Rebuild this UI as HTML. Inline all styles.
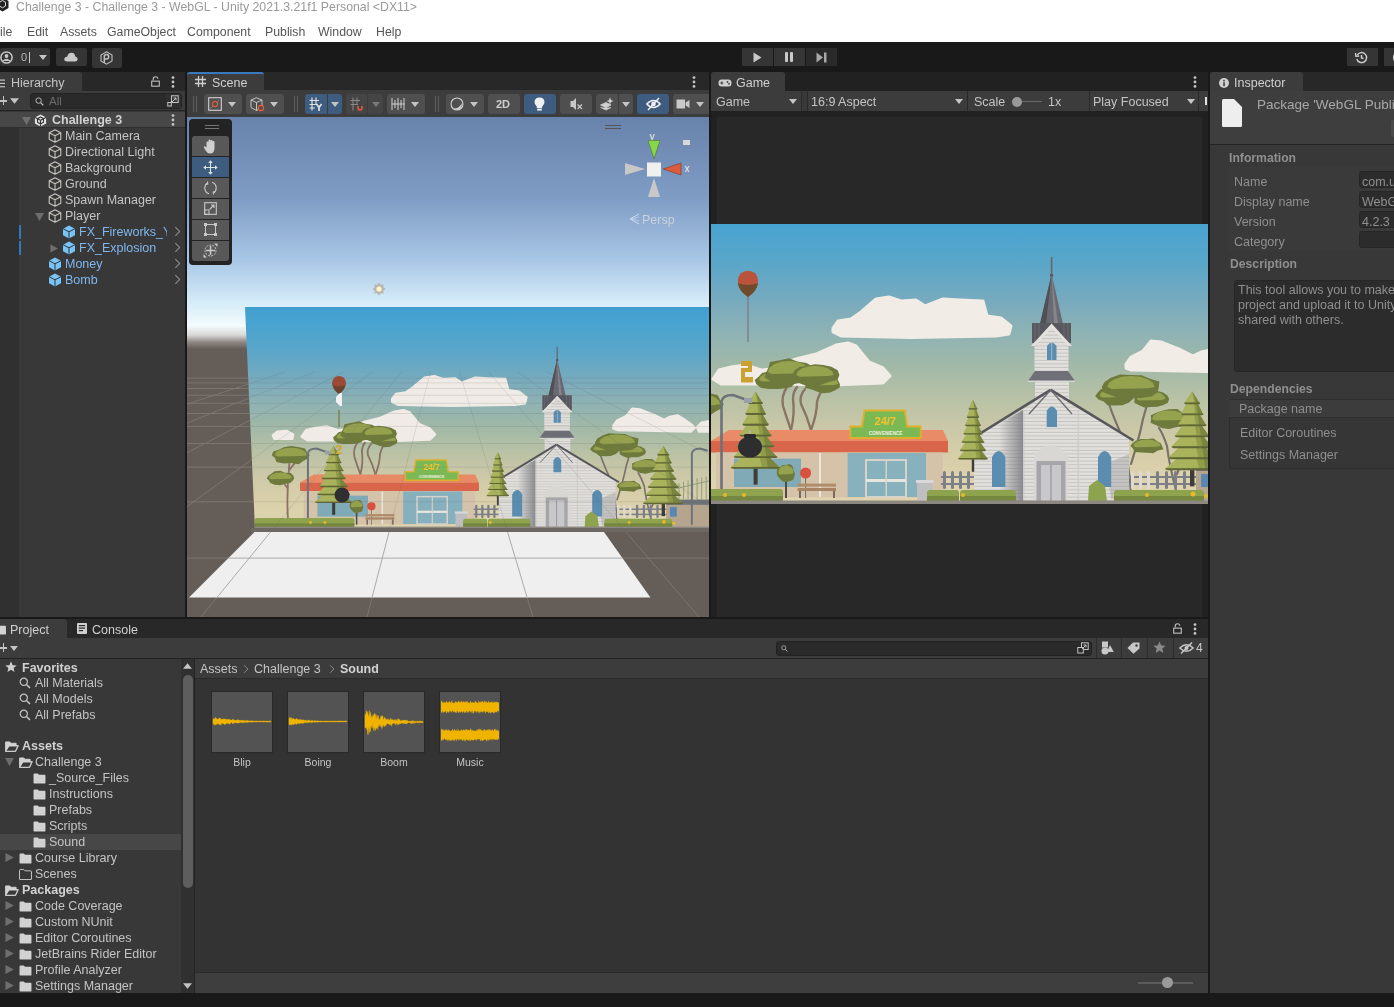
<!DOCTYPE html>
<html><head><meta charset="utf-8">
<style>
*{box-sizing:border-box;margin:0;padding:0}
html,body{width:1394px;height:1007px;overflow:hidden;background:#191919;font-family:"Liberation Sans",sans-serif;font-size:12.5px;color:#c4c4c4}
.a{position:absolute}
.t{position:absolute;white-space:nowrap;line-height:1;will-change:transform}
svg{position:absolute;overflow:visible}
</style></head><body>
<svg width="0" height="0" style="position:absolute;left:0;top:0">
<defs>
<symbol id="cubeo" viewBox="0 0 14 14"><path d="M7,0.8 L12.8,3.8 L12.8,10.2 L7,13.2 L1.2,10.2 L1.2,3.8 Z M1.2,3.8 L7,6.8 L12.8,3.8 M7,6.8 L7,13.2" fill="none" stroke="#c9c6c2" stroke-width="1.1" stroke-linejoin="round"/></symbol>
<symbol id="cubeb" viewBox="0 0 14 14"><path d="M7,0.6 L13,3.7 L13,10.3 L7,13.4 L1,10.3 L1,3.7 Z" fill="#79c4f4"/><path d="M1,3.7 L7,6.8 L13,3.7 M7,6.8 L7,13.4" fill="none" stroke="#2a3640" stroke-width="1"/></symbol>
<symbol id="ucube" viewBox="0 0 14 14"><path d="M7,0.5 L13,3.8 L13,10.2 L7,13.5 L1,10.2 L1,3.8 Z" fill="#e8e8e8"/><path d="M7,3.2 L10.2,5 L10.2,8.8 L7,10.7 L3.8,8.8 L3.8,5 Z M7,6.8 L7,13.5 M7,6.8 L1,3.8 M7,6.8 L13,3.8" fill="none" stroke="#383838" stroke-width="1.3"/></symbol>
<symbol id="tri_d" viewBox="0 0 10 10"><path d="M0,1 L10,1 L5,10 Z" fill="#6e6e6e"/></symbol>
<symbol id="tri_r" viewBox="0 0 10 10"><path d="M0.5,0 L10,5 L0.5,10 Z" fill="#6e6e6e"/></symbol>
<symbol id="chev" viewBox="0 0 8 12"><path d="M1.5,1 L6.5,6 L1.5,11" fill="none" stroke="#8a8a8a" stroke-width="1.3"/></symbol>
<symbol id="dd" viewBox="0 0 10 6"><path d="M0,0 L10,0 L5,6 Z" fill="#c4c4c4"/></symbol>
<symbol id="dots" viewBox="0 0 4 12"><circle cx="2" cy="1.6" r="1.4" fill="#c4c4c4"/><circle cx="2" cy="6" r="1.4" fill="#c4c4c4"/><circle cx="2" cy="10.4" r="1.4" fill="#c4c4c4"/></symbol>
<symbol id="lock" viewBox="0 0 10 12"><path d="M2.5,5 L2.5,3.2 Q2.5,0.8 5,0.8 Q7.5,0.8 7.5,3" fill="none" stroke="#c4c4c4" stroke-width="1.2"/><rect x="0.8" y="5.6" width="8.4" height="5.6" fill="none" stroke="#c4c4c4" stroke-width="1.2"/></symbol>
<symbol id="fold" viewBox="0 0 14 12"><path d="M0.5,1.5 Q0.5,0.5 1.5,0.5 L5,0.5 L6.5,2 L12.5,2 Q13.5,2 13.5,3 L13.5,11 Q13.5,11.5 13,11.5 L1,11.5 Q0.5,11.5 0.5,11 Z" fill="#d2d2d2"/></symbol>
<symbol id="foldo" viewBox="0 0 14 12"><path d="M0.5,1.5 Q0.5,0.5 1.5,0.5 L5,0.5 L6.5,2 L12.5,2 Q13.5,2 13.5,3 L13.5,11 Q13.5,11.5 13,11.5 L1,11.5 Q0.5,11.5 0.5,11 Z" fill="none" stroke="#d2d2d2" stroke-width="1"/></symbol>
<symbol id="foldopen" viewBox="0 0 15 12"><path d="M0.5,11.5 L0.5,1 L5,1 L6.5,2.5 L12,2.5 L12,5 L4,5 L0.5,11.5 L11.5,11.5 L14.5,5 L4,5" fill="#d2d2d2" stroke="#d2d2d2" stroke-width="1" stroke-linejoin="round"/><path d="M1.5,10.5 L4.5,6 L13,6 L10.8,10.5 Z" fill="#383838"/></symbol>
<symbol id="search" viewBox="0 0 12 12"><circle cx="4.8" cy="4.8" r="3.6" fill="none" stroke="#c4c4c4" stroke-width="1.2"/><path d="M7.5,7.5 L11,11" stroke="#c4c4c4" stroke-width="1.6"/></symbol>
</defs></svg>
<svg width="0" height="0" style="position:absolute;left:0;top:0">
<defs>
<linearGradient id="sky" x1="0" y1="-25" x2="0" y2="280" gradientUnits="userSpaceOnUse">
<stop offset="0" stop-color="#3f9ed0"/><stop offset="0.082" stop-color="#48a3d0"/><stop offset="0.213" stop-color="#5aa6c9"/><stop offset="0.344" stop-color="#7aabbd"/><stop offset="0.443" stop-color="#8fb3b4"/><stop offset="0.541" stop-color="#a0b8a8"/><stop offset="0.672" stop-color="#bcc3a6"/><stop offset="0.738" stop-color="#c8c7a8"/><stop offset="0.836" stop-color="#d6cea9"/><stop offset="0.934" stop-color="#ddd3ad"/><stop offset="1" stop-color="#e0d5ae"/>
</linearGradient>
<pattern id="siding" x="0" y="0" width="20" height="3.6" patternUnits="userSpaceOnUse"><rect width="20" height="3.6" fill="#e2e0dc"/><rect y="2.6" width="20" height="1" fill="#c4c3c0"/></pattern>
<g id="pine1"><rect x="-2.2" y="70" width="4.4" height="22" fill="#3f3d3a"/><polygon points="-10.8,61 10.8,61 27.2,76 -27.2,76" fill="#909c48"/><polygon points="-10.8,61 3.24,61 6.8,74 -27.2,75" fill="#a9b35c"/><polygon points="10.8,61 27.2,76 13.6,76" fill="#7a8540"/><polygon points="-27.2,74.5 27.2,74.5 24.48,76.3 -24.48,76.3" fill="#5f6636"/><polygon points="-9.36,50.3333 9.36,50.3333 24,65.3333 -24,65.3333" fill="#909c48"/><polygon points="-9.36,50.3333 2.808,50.3333 6,63.3333 -24,64.3333" fill="#a9b35c"/><polygon points="9.36,50.3333 24,65.3333 12,65.3333" fill="#7a8540"/><polygon points="-24,63.8333 24,63.8333 21.6,65.6333 -21.6,65.6333" fill="#5f6636"/><polygon points="-7.92,39.6667 7.92,39.6667 20.8,54.6667 -20.8,54.6667" fill="#909c48"/><polygon points="-7.92,39.6667 2.376,39.6667 5.2,52.6667 -20.8,53.6667" fill="#a9b35c"/><polygon points="7.92,39.6667 20.8,54.6667 10.4,54.6667" fill="#7a8540"/><polygon points="-20.8,53.1667 20.8,53.1667 18.72,54.9667 -18.72,54.9667" fill="#5f6636"/><polygon points="-6.48,29 6.48,29 17.6,44 -17.6,44" fill="#909c48"/><polygon points="-6.48,29 1.944,29 4.4,42 -17.6,43" fill="#a9b35c"/><polygon points="6.48,29 17.6,44 8.8,44" fill="#7a8540"/><polygon points="-17.6,42.5 17.6,42.5 15.84,44.3 -15.84,44.3" fill="#5f6636"/><polygon points="-5.04,18.3333 5.04,18.3333 14.4,33.3333 -14.4,33.3333" fill="#909c48"/><polygon points="-5.04,18.3333 1.512,18.3333 3.6,31.3333 -14.4,32.3333" fill="#a9b35c"/><polygon points="5.04,18.3333 14.4,33.3333 7.2,33.3333" fill="#7a8540"/><polygon points="-14.4,31.8333 14.4,31.8333 12.96,33.6333 -12.96,33.6333" fill="#5f6636"/><polygon points="-3.6,7.66667 3.6,7.66667 11.2,22.6667 -11.2,22.6667" fill="#909c48"/><polygon points="-3.6,7.66667 1.08,7.66667 2.8,20.6667 -11.2,21.6667" fill="#a9b35c"/><polygon points="3.6,7.66667 11.2,22.6667 5.6,22.6667" fill="#7a8540"/><polygon points="-11.2,21.1667 11.2,21.1667 10.08,22.9667 -10.08,22.9667" fill="#5f6636"/><polygon points="0,0 0,0 8,12 -8,12" fill="#909c48"/><polygon points="0,0 0,0 2,10 -8,11" fill="#a9b35c"/><polygon points="0,0 8,12 4,12" fill="#7a8540"/><polygon points="-8,10.5 8,10.5 7.2,12.3 -7.2,12.3" fill="#5f6636"/></g>
<g id="town">
<rect x="-80" y="-25" width="630" height="305" fill="url(#sky)"/>
<g fill="#f1ece6" stroke="#f1ece6" stroke-width="3" stroke-linejoin="round">
<polygon points="122,104 127,97 140,95 150,88 165,75 178,73 190,77 205,76 214,82 232,75 249,76 272,77 276,92 290,94 300,102 298,110 285,112 200,113.5 130,112 122,108"/>
<polygon points="2,155 8,146 20,143 35,141 50,146 60,145 85,135 105,130 125,121 137,119 145,122 158,138 172,144 179,152 172,159 120,161 60,160 10,160"/>
<polygon points="415,140 420,133 432,127 440,117 450,118 470,126 482,132 490,128 500,126 508,131 518,138 523,143 518,148 470,147 420,146 415,144"/>
<polygon points="526,142 532,136 542,134 550,140 548,148 528,148"/>
<polygon points="-36,153 -30,148 -18,147 -9,152 -10,158 -34,158"/>
</g>
<g stroke="#8a7464" stroke-width="2.4" fill="none" stroke-linecap="round"><path d="M80,206 Q76,195 72,182 Q70,172 76,163"/><path d="M80,206 Q84,190 82,175 Q82,168 86,163"/><path d="M100,206 Q96,192 90,180 Q88,172 94,165"/><path d="M100,206 Q106,190 106,178 Q108,170 112,165"/></g>
<polygon points="85.7,156.0 83.6,159.5 80.5,162.9 73.4,164.5 66.0,165.0 58.2,165.0 49.7,163.8 45.2,160.1 43.7,156.0 47.9,152.4 51.0,148.9 58.4,147.3 66.0,146.8 73.3,147.6 79.8,149.4 87.4,151.8" fill="#6e7a3c"/><polygon points="48.2,156.0 49.5,152.7 53.4,150.0 59.2,148.1 66.0,147.5 72.8,148.1 78.6,150.0 82.5,152.7 83.8,156.0 78.6,157.0 51.3,157.6" fill="#95a24e"/><polygon points="128.9,160.0 128.8,163.5 124.3,166.2 119.1,168.5 112.0,169.3 105.8,167.4 100.8,165.6 94.0,163.7 95.0,160.0 96.4,156.8 97.8,152.9 105.2,151.7 112.0,150.3 118.8,151.7 125.2,153.4 127.2,156.8" fill="#6e7a3c"/><polygon points="96.7,160.0 97.9,157.1 101.2,154.6 106.1,152.9 112.0,152.3 117.9,152.9 122.8,154.6 126.1,157.1 127.3,160.0 122.8,160.9 99.4,161.4" fill="#95a24e"/><polygon points="100.8,148.0 103.0,153.4 96.8,157.8 87.0,159.3 78.0,161.0 68.5,159.9 59.7,157.5 53.3,153.3 55.4,148.0 57.5,143.6 58.9,138.1 68.6,136.2 78.0,134.2 86.4,137.4 95.4,138.9 102.3,142.8" fill="#6e7a3c"/><polygon points="56.8,148.0 58.4,143.8 63.0,140.2 69.9,137.8 78.0,136.9 86.1,137.8 93.0,140.2 97.6,143.8 99.2,148.0 93.0,149.3 60.5,150.1" fill="#95a24e"/><polygon points="128.4,151.0 126.5,155.7 117.9,158.0 111.6,160.2 104.0,162.9 95.1,161.7 87.8,159.1 84.6,155.0 81.4,151.0 83.2,146.7 88.1,143.1 96.3,141.7 104.0,140.2 112.2,141.1 120.4,142.8 126.7,146.3" fill="#6e7a3c"/><polygon points="85.3,151.0 86.7,147.4 90.8,144.4 96.8,142.4 104.0,141.7 111.2,142.4 117.2,144.4 121.3,147.4 122.7,151.0 117.2,152.1 88.6,152.8" fill="#95a24e"/>
<g stroke="#7a726a" stroke-width="2.2" fill="none" stroke-linecap="round"><path d="M420,270 Q418,235 410,210 Q402,192 398,180"/><path d="M420,240 Q428,215 432,195 L436,181"/><path d="M466,270 Q458,240 456,222 Q452,210 448,204"/><path d="M466,250 Q474,232 474,205"/></g>
<polygon points="422.5,172.0 421.6,175.6 417.6,178.8 411.6,181.2 404.0,181.5 396.4,181.2 392.7,177.6 387.5,175.4 384.1,172.0 386.8,168.4 390.0,165.0 397.8,164.5 404.0,163.1 410.5,164.2 416.9,165.6 420.9,168.5" fill="#6e7a3c"/><polygon points="388.7,172.0 389.9,169.1 393.2,166.6 398.1,164.9 404.0,164.3 409.9,164.9 414.8,166.6 418.1,169.1 419.3,172.0 414.8,172.9 391.4,173.4" fill="#95a24e"/><polygon points="458.2,175.0 456.9,178.7 452.0,181.3 446.1,182.8 440.0,182.9 433.2,183.6 428.1,181.3 423.3,178.7 423.5,175.0 423.3,171.3 428.6,169.0 433.0,166.1 440.0,165.5 446.4,166.9 452.1,168.6 456.4,171.4" fill="#6e7a3c"/><polygon points="425.6,175.0 426.6,172.1 429.8,169.6 434.5,167.9 440.0,167.3 445.5,167.9 450.2,169.6 453.4,172.1 454.4,175.0 450.2,175.9 428.1,176.4" fill="#95a24e"/><polygon points="447.8,163.0 446.8,168.2 440.6,172.6 429.8,174.0 420.0,174.5 409.6,174.6 401.3,171.7 392.2,168.3 390.7,163.0 393.5,157.9 399.9,153.7 408.9,150.5 420.0,151.1 430.6,151.2 438.2,154.6 448.4,157.5" fill="#6e7a3c"/><polygon points="396.2,163.0 398.0,158.8 403.2,155.2 410.9,152.8 420.0,151.9 429.1,152.8 436.8,155.2 442.0,158.8 443.8,163.0 436.8,164.3 400.4,165.1" fill="#95a24e"/><polygon points="477.2,195.0 474.9,198.5 472.7,202.3 464.9,203.3 458.0,205.1 450.6,203.9 445.4,201.3 439.5,198.8 440.2,195.0 439.8,191.2 445.3,188.7 451.1,186.7 458.0,185.2 466.3,185.0 470.9,188.6 475.3,191.4" fill="#6e7a3c"/><polygon points="441.0,195.0 442.3,191.7 446.0,189.0 451.5,187.1 458.0,186.5 464.5,187.1 470.0,189.0 473.7,191.7 475.0,195.0 470.0,196.0 444.0,196.6" fill="#95a24e"/><polygon points="451.0,222.0 452.4,225.2 446.3,226.8 442.4,229.3 436.0,228.8 430.2,228.5 423.3,227.9 422.2,224.7 419.5,222.0 421.4,219.2 424.8,216.8 429.9,215.1 436.0,215.1 442.6,214.5 446.2,217.2 449.8,219.3" fill="#6e7a3c"/><polygon points="422.4,222.0 423.4,219.6 426.4,217.5 430.8,216.1 436.0,215.6 441.2,216.1 445.6,217.5 448.6,219.6 449.6,222.0 445.6,222.8 424.8,223.2" fill="#95a24e"/>
<g stroke="#8a7464" stroke-width="2.4" fill="none"><path d="M-16,266 Q-18,230 -14,190"/><path d="M-16,225 Q-24,215 -28,208"/><path d="M-14,200 Q-6,188 2,182"/></g>
<polygon points="12.8,180.0 10.4,184.5 4.1,187.7 -1.6,192.1 -12.0,190.6 -21.6,191.1 -31.4,189.3 -32.8,184.1 -37.3,180.0 -35.7,175.3 -27.7,172.4 -21.3,169.2 -12.0,167.4 -2.5,169.0 6.6,171.1 9.2,175.8" fill="#6e7a3c"/><polygon points="-33.2,180.0 -31.6,176.1 -27.0,172.8 -20.1,170.6 -12.0,169.8 -3.9,170.6 3.0,172.8 7.6,176.1 9.2,180.0 3.0,181.2 -29.5,181.9" fill="#95a24e"/><polygon points="-7.7,211.0 -9.7,214.4 -13.0,217.5 -19.6,218.7 -26.0,220.7 -33.4,220.0 -39.2,217.6 -41.3,214.2 -44.1,211.0 -41.9,207.7 -38.0,205.0 -33.6,201.8 -26.0,200.9 -19.9,203.6 -12.2,204.1 -9.0,207.5" fill="#6e7a3c"/><polygon points="-41.3,211.0 -40.1,208.1 -36.8,205.6 -31.9,203.9 -26.0,203.3 -20.1,203.9 -15.2,205.6 -11.9,208.1 -10.7,211.0 -15.2,211.9 -38.6,212.4" fill="#95a24e"/>
<line x1="340.6" y1="33" x2="340.6" y2="54" stroke="#66666c" stroke-width="1.6"/>
<polygon points="340.6,50 329,100 352,100" fill="#6a6a72"/>
<polygon points="340.6,50 329,100 335,100" fill="#4f4f56"/>
<polygon points="340.6,50 343,100 347,100" fill="#85858c"/>
<rect x="339" y="50" width="3.2" height="2.5" fill="#5a5a60"/>
<rect x="321" y="99" width="39" height="20" fill="#58585f"/>
<g stroke="#707078" stroke-width="0.8"><line x1="324" y1="99" x2="324" y2="119"/><line x1="328" y1="99" x2="328" y2="119"/><line x1="353" y1="99" x2="353" y2="119"/><line x1="357" y1="99" x2="357" y2="119"/></g>
<rect x="323.5" y="118" width="34" height="32" fill="url(#siding)"/>
<polygon points="323,120 340.6,101 358,120" fill="url(#siding)"/>
<polygon points="320,122 340.6,99.5 361,122 357.5,122 340.6,104 323.5,122" fill="#e4e2de"/>
<path d="M336,136 L336,122 Q340.8,115 345.5,122 L345.5,136 Z" fill="#5b8db0"/>
<rect x="340.2" y="118" width="1" height="18" fill="#d0d8e0" opacity="0.6"/>
<polygon points="317,157 324,147 357,147 364,157" fill="#6f6f77"/>
<rect x="317" y="156.5" width="47" height="1.5" fill="#d8d8d8"/>
<rect x="324" y="158" width="34" height="20" fill="url(#siding)"/>
<polygon points="263,214 339.7,169 418,214 418,277 263,277" fill="url(#siding)"/>
<linearGradient id="shad" x1="0" x2="1"><stop offset="0" stop-color="#6e7078" stop-opacity="0"/><stop offset="1" stop-color="#6e7078" stop-opacity="0.75"/></linearGradient>
<polygon points="288,200 312,186 312,277 288,277" fill="url(#shad)"/>
<polygon points="395,240 418,230 418,275 400,275" fill="#8e9096" opacity="0.35"/>
<rect x="312" y="186" width="1.5" height="91" fill="#cfcdc9"/>
<rect x="366.5" y="186" width="1.5" height="91" fill="#cfcdc9"/>
<line x1="339.7" y1="165.8" x2="257.9" y2="216.5" stroke="#55555c" stroke-width="2.6"/>
<line x1="339.7" y1="165.8" x2="422.5" y2="216.5" stroke="#55555c" stroke-width="2.6"/>
<line x1="339.7" y1="166" x2="318" y2="190" stroke="#6a6a70" stroke-width="1.3"/>
<line x1="339.7" y1="166" x2="361" y2="190" stroke="#6a6a70" stroke-width="1.3"/>
<path d="M335.7,203 L335.7,187 Q340.8,178 346,187 L346,203 Z" fill="#5b8db0"/>
<path d="M322.8,277 L322.8,232 Q339.7,210 356.6,232 L356.6,277 Z" fill="#d9d7d3"/>
<rect x="325.5" y="237" width="29" height="40" fill="#a5a5aa"/>
<rect x="330" y="241" width="20" height="36" fill="#c8c8cb"/>
<rect x="339.5" y="241" width="1" height="36" fill="#8a8a90"/>
<path d="M281,263 L281,233 Q287.7,221 294.4,233 L294.4,263 Z" fill="#5b8db0"/>
<path d="M387,263 L387,233 Q393.6,221 400.2,233 L400.2,263 Z" fill="#5b8db0"/>
<polygon points="18,206 232,206 237,217 0,217" fill="#e88b66"/>
<polygon points="0,217 237,217 237,228.5 0,228.5" fill="#d9664b"/>
<rect x="5" y="228.5" width="227" height="45" fill="#d5c3a9"/>
<rect x="23" y="234.6" width="67" height="28.4" fill="#80aab6"/>
<rect x="108" y="229" width="2" height="44" fill="#ece6dc"/>
<rect x="136.6" y="229" width="78.4" height="44" fill="#86b1bd"/>
<rect x="155" y="236" width="40" height="37" fill="none" stroke="#d8d2ca" stroke-width="2"/>
<rect x="155" y="255" width="40" height="3" fill="#e8e4de"/>
<rect x="174.5" y="236" width="1.5" height="37" fill="#d8d2ca"/>
<polygon points="152.7,185.5 194.6,185.5 197,201.6 210.7,201.6 210.7,215 138.4,215 138.4,201.6 150,201.6" fill="#dfb02b"/>
<polygon points="154.3,187.5 193,187.5 195.3,203.4 208.8,203.4 208.8,213 140.3,213 140.3,203.4 151.8,203.4" fill="#7bb955"/>
<text x="174" y="200.5" font-family="Liberation Sans" font-weight="bold" font-size="11" fill="#f3c230" text-anchor="middle">24/7</text>
<text x="174.5" y="211" font-family="Liberation Sans" font-weight="bold" font-size="4.6" fill="#f4f0e6" text-anchor="middle">CONVENIENCE</text>
<line x1="94.6" y1="249" x2="94.6" y2="274" stroke="#6a6e74" stroke-width="1"/>
<circle cx="94.6" cy="249" r="5.5" fill="#d9503e"/>
<rect x="86.6" y="259.6" width="38.4" height="3" fill="#b08c6a"/><rect x="86.6" y="264" width="38.4" height="3" fill="#a88464"/><rect x="88" y="267" width="2" height="7" fill="#7a6a5a"/><rect x="122" y="267" width="2" height="7" fill="#7a6a5a"/>
<rect x="206" y="257" width="15.4" height="19" fill="#bfbfc2"/><rect x="205" y="256" width="17.4" height="3" fill="#d8d8da"/>
<line x1="75" y1="255" x2="75" y2="274" stroke="#4f4c46" stroke-width="2"/><polygon points="83.9,249.0 83.4,252.5 82.0,256.0 78.4,257.2 75.0,258.0 71.5,257.5 69.1,254.9 66.7,252.5 65.7,249.0 66.1,245.3 69.3,243.3 71.7,241.1 75.0,240.9 78.7,240.1 81.7,242.3 82.4,245.9" fill="#6e7a3c"/><polygon points="67.3,249.0 67.9,246.1 69.6,243.6 72.1,241.9 75.0,241.3 77.9,241.9 80.4,243.6 82.1,246.1 82.7,249.0 80.4,249.9 68.7,250.4" fill="#95a24e"/>
<g fill="#7c7f88"><rect x="230" y="252" width="33" height="2"/><rect x="230" y="259" width="33" height="2"/><rect x="232" y="247" width="3" height="18" rx="1.5"/><rect x="240" y="247" width="3" height="18" rx="1.5"/><rect x="248" y="247" width="3" height="18" rx="1.5"/><rect x="256" y="247" width="3" height="18" rx="1.5"/>
<rect x="418" y="252" width="70" height="2"/><rect x="418" y="259" width="70" height="2"/><rect x="445" y="247" width="3" height="18" rx="1.5"/><rect x="454" y="247" width="3" height="18" rx="1.5"/><rect x="463" y="247" width="3" height="18" rx="1.5"/><rect x="472" y="247" width="3" height="18" rx="1.5"/></g>
<g fill="#dedad2"><rect x="420" y="247" width="3" height="18" rx="1.5"/><rect x="428" y="247" width="3" height="18" rx="1.5"/><rect x="436" y="247" width="3" height="18" rx="1.5"/></g>
<rect x="485" y="246" width="62" height="31" fill="#b5a58e"/><rect x="485" y="240" width="62" height="7" fill="#6f7378"/><g stroke="#8b9a7e" stroke-width="1.2"><line x1="490" y1="240" x2="490" y2="222"/><line x1="496" y1="240" x2="496" y2="220"/><line x1="502" y1="240" x2="502" y2="218"/><line x1="508" y1="240" x2="508" y2="216"/><line x1="514" y1="240" x2="514" y2="214"/><line x1="520" y1="240" x2="520" y2="212"/><line x1="526" y1="240" x2="526" y2="211"/><line x1="532" y1="240" x2="532" y2="210"/><line x1="538" y1="240" x2="538" y2="209"/><line x1="486" y1="228" x2="545" y2="214"/></g><rect x="490" y="250" width="9" height="13" fill="#5a86b0"/>
<use href="#pine1" transform="translate(44.6,167.7) scale(0.92,1.01)"/>
<use href="#pine1" transform="translate(262,176) scale(0.55,0.78)"/>
<use href="#pine1" transform="translate(481.2,167.6) scale(1.0,1.03)"/>
<g fill="none" stroke="#6d727a"><path d="M10.5,274 L10.5,178 Q11,171 22,171 L36,176" stroke-width="2.6"/><path d="M519,274 L519,178 Q520,171 530,171 L540,174" stroke-width="2.6"/></g>
<rect x="33" y="174" width="8" height="5" fill="#9aa0a8"/>
<g fill="#8ea34e"><rect x="-60" y="265" width="132" height="12" rx="3"/><rect x="216" y="266" width="32" height="11" rx="3"/><rect x="249" y="266" width="56" height="11" rx="3"/><rect x="403" y="266" width="90" height="11" rx="3"/><polygon points="377,277 378,262 386,256 394,262 396,277"/></g>
<g fill="#76883f"><rect x="-60" y="272" width="132" height="5"/><rect x="216" y="272" width="32" height="5"/><rect x="249" y="272" width="56" height="5"/><rect x="403" y="272" width="90" height="5"/></g>
<g fill="#e6b82a"><circle cx="14" cy="271" r="2"/><circle cx="33" cy="271" r="2"/><circle cx="252" cy="271" r="2"/><circle cx="436" cy="271" r="2"/><circle cx="482" cy="270" r="2.5"/><circle cx="495" cy="272" r="2"/></g>
<rect x="-80" y="276.5" width="630" height="4" fill="#8c8881"/>
</g>
</defs></svg>
<!-- TITLE BAR -->
<div class="a" style="left:0;top:0;width:1394px;height:42px;background:#fff"></div>
<svg style="left:-4px;top:-3px;width:13px;height:15px" viewBox="0 0 13 15"><path d="M6.5,0.5 L12.5,4 L12.5,11 L6.5,14.5 L0.5,11 L0.5,4 Z" fill="#222"/><path d="M6.5,3.5 L9.5,5.2 L9.5,9 L6.5,10.8 L3.5,9 L3.5,5.2 Z" fill="none" stroke="#ddd" stroke-width="1"/></svg>
<div class="t" style="left:16px;top:1px;font-size:12.3px;color:#9a9a9a">Challenge 3 - Challenge 3 - WebGL - Unity 2021.3.21f1 Personal &lt;DX11&gt;</div>
<div class="t" style="left:0;top:26px;font-size:12.3px;color:#555555">
<span class="t" style="left:-0.5px">ile</span><span class="t" style="left:26.5px">Edit</span><span class="t" style="left:59.5px">Assets</span><span class="t" style="left:106.5px">GameObject</span><span class="t" style="left:186.5px">Component</span><span class="t" style="left:265px">Publish</span><span class="t" style="left:318px">Window</span><span class="t" style="left:376px">Help</span>
</div>

<!-- MAIN TOOLBAR -->
<div class="a" style="left:0;top:48px;width:50px;height:18px;background:#353535;border-radius:2px"></div>
<div class="a" style="left:56px;top:48px;width:31px;height:18px;background:#353535;border-radius:2px"></div>
<div class="a" style="left:92px;top:48px;width:30px;height:20px;background:#353535;border-radius:2px"></div>
<div class="a" style="left:742px;top:48px;width:31px;height:18px;background:#353535"></div>
<div class="a" style="left:774px;top:48px;width:31px;height:18px;background:#353535"></div>
<div class="a" style="left:806px;top:48px;width:31px;height:18px;background:#2a2a2a"></div>
<div class="a" style="left:1347px;top:48px;width:31px;height:18px;background:#353535"></div>
<div class="a" style="left:1384px;top:48px;width:20px;height:18px;background:#353535"></div>

<!-- HIERARCHY -->
<div class="a" style="left:0;top:72px;width:185px;height:545px;background:#383838"></div>
<div class="a" style="left:0;top:72px;width:185px;height:19px;background:#282828"></div>
<div class="a" style="left:0;top:72px;width:82px;height:19px;background:#3c3c3c;border-top-right-radius:3px"></div>
<div class="a" style="left:0;top:91px;width:185px;height:20px;background:#3c3c3c;border-bottom:1px solid #232323"></div>
<div class="a" style="left:0;top:112px;width:19px;height:505px;background:#303030"></div>


<!-- HIERARCHY CONTENT -->
<div class="a" style="left:0;top:112px;width:185px;height:16px;background:#474747;border-bottom:1px solid #2e2e2e"></div>
<svg style="left:-3px;top:79px;width:9px;height:9px" viewBox="0 0 9 9"><rect x="0" y="0.5" width="8" height="1.2" fill="#c4c4c4"/><rect x="0" y="3.8" width="8" height="1.2" fill="#c4c4c4"/><rect x="0" y="7.1" width="8" height="1.2" fill="#c4c4c4"/></svg>
<div class="t" style="left:10.5px;top:77.4px;color:#c4c4c4">Hierarchy</div>
<svg style="left:151px;top:76px;width:9px;height:11px"><use href="#lock"/></svg>
<svg style="left:171px;top:76px;width:4px;height:12px"><use href="#dots"/></svg>
<div class="a" style="left:0;top:100px;width:7px;height:1.6px;background:#c4c4c4"></div>
<div class="a" style="left:2.5px;top:96px;width:1.6px;height:9px;background:#c4c4c4"></div>
<svg style="left:10px;top:98px;width:9px;height:6px"><use href="#dd"/></svg>
<div class="a" style="left:30px;top:93px;width:152px;height:16px;background:#2a2a2a;border-radius:3px;border:1px solid #232323"></div>
<svg style="left:35px;top:96.5px;width:9px;height:9px"><use href="#search"/></svg>
<div class="t" style="left:49px;top:96.0px;font-size:11.5px;color:#6b6b6b">All</div>
<div class="a" style="left:165px;top:94px;width:16px;height:14px;background:#303030;border-left:1px solid #2a2a2a"></div>
<svg style="left:167px;top:95px;width:12px;height:12px" viewBox="0 0 12 12"><rect x="4.5" y="0.8" width="6.7" height="6.7" fill="none" stroke="#c4c4c4" stroke-width="1"/><rect x="0.8" y="7.5" width="3.5" height="3.5" fill="none" stroke="#c4c4c4" stroke-width="1"/><path d="M4.5,7.5 L9,3 M6.5,3 L9,3 L9,5.5" fill="none" stroke="#c4c4c4" stroke-width="1"/></svg>
<svg style="left:21.5px;top:116px;width:9px;height:9px"><use href="#tri_d"/></svg>
<svg style="left:34px;top:113.5px;width:13px;height:13px"><use href="#ucube"/></svg>
<div class="t" style="left:51.8px;top:114.4px;font-weight:bold;color:#d2d2d2">Challenge 3</div>
<svg style="left:171px;top:114px;width:4px;height:12px"><use href="#dots"/></svg>
<svg style="left:48px;top:129px;width:14px;height:14px"><use href="#cubeo"/></svg>
<div class="t" style="left:64.8px;top:130.4px">Main Camera</div>
<svg style="left:48px;top:145px;width:14px;height:14px"><use href="#cubeo"/></svg>
<div class="t" style="left:64.8px;top:146.4px">Directional Light</div>
<svg style="left:48px;top:161px;width:14px;height:14px"><use href="#cubeo"/></svg>
<div class="t" style="left:64.8px;top:162.4px">Background</div>
<svg style="left:48px;top:177px;width:14px;height:14px"><use href="#cubeo"/></svg>
<div class="t" style="left:64.8px;top:178.4px">Ground</div>
<svg style="left:48px;top:193px;width:14px;height:14px"><use href="#cubeo"/></svg>
<div class="t" style="left:64.8px;top:194.4px">Spawn Manager</div>
<svg style="left:35px;top:212px;width:9px;height:9px"><use href="#tri_d"/></svg>
<svg style="left:48px;top:209px;width:14px;height:14px"><use href="#cubeo"/></svg>
<div class="t" style="left:64.8px;top:210.4px">Player</div>
<div class="a" style="left:19px;top:225px;width:2px;height:14px;background:#2f79b5"></div>
<svg style="left:62px;top:225px;width:14px;height:14px"><use href="#cubeb"/></svg>
<div class="t" style="left:78.5px;top:226.4px;color:#80b7ef;width:88px;overflow:hidden">FX_Fireworks_Y</div>
<svg style="left:174px;top:226px;width:7px;height:11px"><use href="#chev"/></svg>
<div class="a" style="left:19px;top:241px;width:2px;height:14px;background:#2f79b5"></div>
<svg style="left:50px;top:244px;width:8px;height:9px"><use href="#tri_r"/></svg>
<svg style="left:62px;top:241px;width:14px;height:14px"><use href="#cubeb"/></svg>
<div class="t" style="left:78.5px;top:242.4px;color:#80b7ef">FX_Explosion</div>
<svg style="left:174px;top:242px;width:7px;height:11px"><use href="#chev"/></svg>
<svg style="left:48px;top:257px;width:14px;height:14px"><use href="#cubeb"/></svg>
<div class="t" style="left:64.8px;top:258.4px;color:#80b7ef">Money</div>
<svg style="left:174px;top:258px;width:7px;height:11px"><use href="#chev"/></svg>
<svg style="left:48px;top:273px;width:14px;height:14px"><use href="#cubeb"/></svg>
<div class="t" style="left:64.8px;top:274.4px;color:#80b7ef">Bomb</div>
<svg style="left:174px;top:274px;width:7px;height:11px"><use href="#chev"/></svg>

<!-- SCENE PANEL -->
<div class="a" style="left:187px;top:72px;width:522px;height:545px;background:#383838"></div>
<div class="a" style="left:187px;top:72px;width:522px;height:18px;background:#282828"></div>
<div class="a" style="left:187px;top:72px;width:77px;height:19px;background:#3c3c3c;border-top:2px solid #3a79bb;border-radius:3px 3px 0 0"></div>
<div class="a" style="left:187px;top:90px;width:522px;height:27px;background:#3c3c3c"></div>
<div id="sceneview" class="a" style="left:187px;top:117px;width:522px;height:500px;background:#655e58;overflow:hidden"><svg width="522" height="500" style="left:0;top:0;overflow:hidden">
<defs>
<linearGradient id="ssky" x1="0" y1="0" x2="0" y2="232" gradientUnits="userSpaceOnUse">
<stop offset="0" stop-color="#6883ab"/><stop offset="0.35" stop-color="#7f9cc4"/><stop offset="0.62" stop-color="#a9c7e6"/><stop offset="0.8" stop-color="#d5ecf8"/><stop offset="0.9" stop-color="#f4fbfd"/><stop offset="0.94" stop-color="#d8d8d6"/><stop offset="0.97" stop-color="#8f8884"/><stop offset="1" stop-color="#655e58"/>
</linearGradient>
<clipPath id="quadclip"><polygon points="58,190 522,190 522,412 68,412"/></clipPath>
</defs>
<rect x="0" y="0" width="522" height="232" fill="url(#ssky)"/>
<g stroke="#7b756f" stroke-width="1" fill="none"><line x1="0" y1="441.1" x2="522" y2="441.1"/><line x1="0" y1="384.8" x2="522" y2="384.8"/><line x1="0" y1="350.1" x2="522" y2="350.1"/><line x1="0" y1="326.5" x2="522" y2="326.5"/><line x1="0" y1="309.4" x2="522" y2="309.4"/><line x1="0" y1="296.5" x2="522" y2="296.5"/><line x1="0" y1="286.3" x2="522" y2="286.3"/><line x1="0" y1="278.2" x2="522" y2="278.2"/><line x1="0" y1="271.5" x2="522" y2="271.5"/><line x1="0" y1="265.9" x2="522" y2="265.9"/><line x1="0" y1="261.1" x2="522" y2="261.1"/><line x1="98.2" y1="255" x2="-650" y2="500"/><line x1="127.3" y1="255" x2="-484" y2="500"/><line x1="156.3" y1="255" x2="-318" y2="500"/><line x1="185.4" y1="255" x2="-152" y2="500"/><line x1="214.5" y1="255" x2="14" y2="500"/><line x1="243.5" y1="255" x2="180" y2="500"/><line x1="272.6" y1="255" x2="346" y2="500"/><line x1="301.6" y1="255" x2="512" y2="500"/><line x1="330.7" y1="255" x2="678" y2="500"/><line x1="359.8" y1="255" x2="844" y2="500"/></g>
<g clip-path="url(#quadclip)">
<use href="#town" transform="translate(113,205) scale(0.755,0.74)"/>
<g stroke="#5a5a5a" stroke-width="0.8" opacity="0.2"><line x1="58" y1="441.1" x2="522" y2="441.1"/><line x1="58" y1="384.8" x2="522" y2="384.8"/><line x1="58" y1="350.1" x2="522" y2="350.1"/><line x1="58" y1="326.5" x2="522" y2="326.5"/><line x1="58" y1="309.4" x2="522" y2="309.4"/><line x1="58" y1="296.5" x2="522" y2="296.5"/><line x1="58" y1="286.3" x2="522" y2="286.3"/><line x1="58" y1="278.2" x2="522" y2="278.2"/><line x1="58" y1="271.5" x2="522" y2="271.5"/><line x1="58" y1="265.9" x2="522" y2="265.9"/><line x1="58" y1="261.1" x2="522" y2="261.1"/><line x1="98.2" y1="255" x2="-650" y2="500"/><line x1="127.3" y1="255" x2="-484" y2="500"/><line x1="156.3" y1="255" x2="-318" y2="500"/><line x1="185.4" y1="255" x2="-152" y2="500"/><line x1="214.5" y1="255" x2="14" y2="500"/><line x1="243.5" y1="255" x2="180" y2="500"/><line x1="272.6" y1="255" x2="346" y2="500"/><line x1="301.6" y1="255" x2="512" y2="500"/><line x1="330.7" y1="255" x2="678" y2="500"/><line x1="359.8" y1="255" x2="844" y2="500"/></g>
</g>
<rect x="64" y="411" width="458" height="4" fill="#6e6862"/>
<polygon points="67.5,415 417,415 463.4,480.6 2,480.6" fill="#efefef"/>
<clipPath id="planeclip"><polygon points="67.5,415 417,415 463.4,480.6 2,480.6"/></clipPath><g stroke="#aaaaaa" stroke-width="1" fill="none" clip-path="url(#planeclip)"><line x1="0" y1="441.1" x2="522" y2="441.1"/><line x1="0" y1="384.8" x2="522" y2="384.8"/><line x1="0" y1="350.1" x2="522" y2="350.1"/><line x1="0" y1="326.5" x2="522" y2="326.5"/><line x1="0" y1="309.4" x2="522" y2="309.4"/><line x1="0" y1="296.5" x2="522" y2="296.5"/><line x1="0" y1="286.3" x2="522" y2="286.3"/><line x1="0" y1="278.2" x2="522" y2="278.2"/><line x1="0" y1="271.5" x2="522" y2="271.5"/><line x1="0" y1="265.9" x2="522" y2="265.9"/><line x1="0" y1="261.1" x2="522" y2="261.1"/><line x1="98.2" y1="255" x2="-650" y2="500"/><line x1="127.3" y1="255" x2="-484" y2="500"/><line x1="156.3" y1="255" x2="-318" y2="500"/><line x1="185.4" y1="255" x2="-152" y2="500"/><line x1="214.5" y1="255" x2="14" y2="500"/><line x1="243.5" y1="255" x2="180" y2="500"/><line x1="272.6" y1="255" x2="346" y2="500"/><line x1="301.6" y1="255" x2="512" y2="500"/><line x1="330.7" y1="255" x2="678" y2="500"/><line x1="359.8" y1="255" x2="844" y2="500"/></g>
<g>
<line x1="152" y1="293" x2="152" y2="310" stroke="#6e7a42" stroke-width="1.2"/>
<path d="M152,277 Q145,272 145,266 Q146,259 152,259 Q158,259 159,266 Q159,272 152,277 Z" fill="#9b4a36"/>
<path d="M146,268 Q152,271 158,268 Q157,274 152,277 Q147,274 146,268 Z" fill="#6a4330"/>
<polygon points="149,280 153,276 155,276 155,289 153,289 149,285" fill="#f2f2f2"/>
<text x="152" y="337" font-family="Liberation Sans" font-weight="bold" font-size="13" fill="#d3a833" text-anchor="middle">2</text>
<circle cx="155" cy="378" r="7.5" fill="#2f2f31"/>
<g transform="translate(192,172)"><polygon points="0,-6.5 1.8,-4.3 4.6,-4.6 4.3,-1.8 6.5,0 4.3,1.8 4.6,4.6 1.8,4.3 0,6.5 -1.8,4.3 -4.6,4.6 -4.3,1.8 -6.5,0 -4.3,-1.8 -4.6,-4.6 -1.8,-4.3" fill="#b8b6ae"/><circle r="2.6" fill="#fff4cc"/></g>
</g>
</svg>
<!-- tools overlay -->
<div class="a" style="left:2px;top:2px;width:43px;height:146px;background:#232323;border-radius:4px"></div>
<div class="a" style="left:18px;top:8px;width:14px;height:1px;background:#777"></div>
<div class="a" style="left:18px;top:11px;width:14px;height:1px;background:#777"></div>
<div class="a" style="left:5px;top:19px;width:37px;height:20px;background:#585858;border-radius:3px 3px 0 0"></div>
<div class="a" style="left:5px;top:40px;width:37px;height:20px;background:#3e5c80"></div>
<div class="a" style="left:5px;top:61px;width:37px;height:20px;background:#585858"></div>
<div class="a" style="left:5px;top:82px;width:37px;height:20px;background:#585858"></div>
<div class="a" style="left:5px;top:103px;width:37px;height:20px;background:#585858"></div>
<div class="a" style="left:5px;top:124px;width:37px;height:20px;background:#585858;border-radius:0 0 3px 3px"></div>
<svg style="left:16px;top:22px;width:15px;height:15px" viewBox="0 0 15 15"><path d="M3.5,8.5 L3.5,3.5 Q3.5,2.5 4.5,2.5 Q5.5,2.5 5.5,3.5 L5.5,7 L5.5,1.5 Q5.5,0.5 6.5,0.5 Q7.5,0.5 7.5,1.5 L7.5,7 L7.5,2 Q7.5,1 8.5,1 Q9.5,1 9.5,2 L9.5,7 L9.5,3 Q9.5,2 10.5,2 Q11.5,2 11.5,3 L11.5,9 Q11.5,14.5 7,14.5 Q4.5,14.5 3,12 L0.8,8.5 Q0.5,7.5 1.3,7.3 Q2.2,7.2 3.5,8.5 Z" fill="#d0d0d0"/></svg>
<svg style="left:16px;top:43px;width:15px;height:15px" viewBox="0 0 15 15"><path d="M7.5,1 L7.5,14 M1,7.5 L14,7.5" stroke="#d8e4e0" stroke-width="1.1"/><path d="M7.5,0.3 L9.8,3 L5.2,3 Z M7.5,14.7 L9.8,12 L5.2,12 Z M0.3,7.5 L3,5.2 L3,9.8 Z M14.7,7.5 L12,5.2 L12,9.8 Z" fill="#d8e4e0"/></svg>
<svg style="left:17px;top:64px;width:13px;height:14px" viewBox="0 0 13 14"><path d="M5,12.8 Q0.8,11.5 0.8,7 Q0.8,3.5 3.5,2 M8,1.2 Q12.2,2.5 12.2,7 Q12.2,10.5 9.5,12" fill="none" stroke="#c8c8c8" stroke-width="1.1"/><path d="M3.5,0.5 L3.8,3 L1.5,3.5 M9.5,13.5 L9.2,11 L11.5,10.5" fill="none" stroke="#c8c8c8" stroke-width="1.1"/></svg>
<svg style="left:17px;top:85px;width:13px;height:13px" viewBox="0 0 13 13"><rect x="0.7" y="0.7" width="11.6" height="11.6" fill="none" stroke="#c8c8c8" stroke-width="1.1"/><rect x="0.7" y="8" width="4.3" height="4.3" fill="none" stroke="#c8c8c8" stroke-width="1"/><path d="M5.5,7.5 L10,3 M7,3 L10,3 L10,6" fill="none" stroke="#c8c8c8" stroke-width="1.1"/></svg>
<svg style="left:17px;top:106px;width:13px;height:13px" viewBox="0 0 13 13"><path d="M2,1.5 L11,1.5 M2,11.5 L11,11.5 M1.5,2 L1.5,11 M11.5,2 L11.5,11" stroke="#c8c8c8" stroke-width="1"/><rect x="0" y="0" width="3" height="3" fill="#c8c8c8"/><rect x="10" y="0" width="3" height="3" fill="#c8c8c8"/><rect x="0" y="10" width="3" height="3" fill="#c8c8c8"/><rect x="10" y="10" width="3" height="3" fill="#c8c8c8"/></svg>
<svg style="left:16px;top:126px;width:15px;height:15px" viewBox="0 0 15 15"><circle cx="7.5" cy="7.5" r="5.5" fill="none" stroke="#c8c8c8" stroke-width="1" stroke-dasharray="2,1"/><path d="M7.5,3 L7.5,12 M3,7.5 L12,7.5" stroke="#c8c8c8" stroke-width="1.6"/><path d="M0.5,14.5 L0.5,11 L4,14.5 Z M14.5,0.5 L14.5,4 L11,0.5 Z" fill="#c8c8c8"/></svg>
<!-- gizmo -->
<div class="a" style="left:418px;top:8px;width:16px;height:1px;background:#5a5550"></div>
<div class="a" style="left:418px;top:11px;width:16px;height:1px;background:#5a5550"></div>
<svg style="left:443px;top:12px;width:75px;height:115px" viewBox="0 0 75 115">
<text x="22" y="11" font-family="Liberation Sans" font-size="10" fill="#eeeeee" text-anchor="middle">y</text>
<path d="M18,11.5 L30,11.5 L24,30 Z" fill="#86d84a" stroke="#566b30" stroke-width="0.6"/>
<path d="M-5,34 L-5,46 L15,40 Z" fill="#c8c8c8"/>
<path d="M51,34 L51,46 L33,40 Z" fill="#dd5a3a" stroke="#7a3a2a" stroke-width="0.6"/>
<path d="M18,68 L30,68 L24,49 Z" fill="#c8c8c8"/>
<rect x="17" y="33.5" width="14" height="14" fill="#f0f0f0"/>
<text x="57" y="43" font-family="Liberation Sans" font-size="10" fill="#eeeeee" text-anchor="middle">x</text>
<rect x="53" y="11" width="7" height="5" fill="#d8d8d8"/>
</svg>
<svg style="left:442px;top:96px;width:11px;height:12px" viewBox="0 0 11 12"><path d="M10,1 L1,6 L10,11" fill="none" stroke="#c8dcf0" stroke-width="1"/><path d="M10,4 L2,6 L10,8" fill="none" stroke="#c8dcf0" stroke-width="0.7"/></svg>
<div class="t" style="left:455px;top:97px;font-size:12.5px;color:#c8d2dc">Persp</div>
</div>

<!-- GAME PANEL -->
<div class="a" style="left:711px;top:72px;width:497px;height:545px;background:#212121"></div>
<div class="a" style="left:716px;top:116px;width:487px;height:501px;background:#282828;border:1px dotted #1e1e1e;border-bottom:none"></div>
<div class="a" style="left:711px;top:72px;width:74px;height:19px;background:#3c3c3c;border-radius:3px 3px 0 0"></div>
<div class="a" style="left:711px;top:91px;width:497px;height:20px;background:#3c3c3c"></div>
<div id="gameview" class="a" style="left:711px;top:224px;width:497px;height:280px;background:#47a2d0;overflow:hidden"><svg width="497" height="280" style="left:0;top:0;overflow:hidden"><use href="#town"/>
<line x1="37" y1="72" x2="37" y2="118" stroke="#7d8590" stroke-width="1.6"/>
<path d="M37,73 Q26,66 26.8,56 Q28,47 37,46.8 Q46,47 47,56 Q47.5,66 37,73 Z" fill="#b9533c"/>
<path d="M27,59 Q37,63 47,59 Q46,67 37,73 Q28,67 27,59 Z" fill="#6e4a2e"/>
<path d="M30,137 L41,137 L41,148 L34,148 L34,153 L42,153 L42,158.5 L30,158.5 L30,144 L37,144 L37,142 L30,142 Z" fill="#c9a232"/>
<ellipse cx="39" cy="223" rx="12" ry="10.5" fill="#2e2e30"/><rect x="33" y="210" width="12" height="4" rx="1.5" fill="#2a2a2c"/><rect x="38" y="206" width="2" height="4" fill="#b8b0a0"/>
</svg></div>

<!-- INSPECTOR -->
<div class="a" style="left:1210px;top:72px;width:184px;height:921px;background:#383838"></div>
<div class="a" style="left:1210px;top:72px;width:184px;height:19px;background:#282828"></div>
<div class="a" style="left:1210px;top:72px;width:93px;height:19px;background:#3c3c3c;border-radius:3px 3px 0 0"></div>


<!-- MAIN TOOLBAR ICONS -->
<svg style="left:0;top:51px;width:13px;height:13px" viewBox="0 0 13 13"><circle cx="6.5" cy="6.5" r="5.6" fill="none" stroke="#c8c8c8" stroke-width="1.5"/><circle cx="6.5" cy="5" r="1.9" fill="#c8c8c8"/><path d="M3,10 Q6.5,6.5 10,10" fill="#c8c8c8" stroke="#c8c8c8" stroke-width="1"/></svg>
<div class="t" style="left:21px;top:52px;font-size:11px;color:#b8b8b8">0</div>
<div class="a" style="left:29px;top:52px;width:1px;height:11px;background:#c8c8c8"></div>
<svg style="left:39px;top:55px;width:8px;height:5px"><use href="#dd"/></svg>
<svg style="left:64px;top:52px;width:14px;height:10px" viewBox="0 0 14 10"><path d="M3,9.5 Q0,9.5 0.3,6.8 Q0.8,4.6 3.2,4.8 Q4,1 7.5,0.8 Q11,1 11.3,4.6 Q13.8,5 13.7,7.3 Q13.5,9.5 11,9.5 Z" fill="#c8c8c8"/></svg>
<svg style="left:100px;top:51px;width:13px;height:14px" viewBox="0 0 13 14"><path d="M6.5,0.8 L12,4 L12,10 L6.5,13.2 L1,10 L1,4 Z" fill="none" stroke="#c0c0c0" stroke-width="1.1"/><path d="M4.3,12 L4.3,5.5 Q4.3,3.5 6.5,3.5 Q8.7,3.5 8.7,5.8 Q8.7,8 6.5,8 L5,8" fill="none" stroke="#c0c0c0" stroke-width="1.5"/></svg>
<svg style="left:753px;top:52px;width:9px;height:11px" viewBox="0 0 9 11"><path d="M0.5,0.5 L8.5,5.5 L0.5,10.5 Z" fill="#c8c8c8"/></svg>
<div class="a" style="left:785px;top:52px;width:3px;height:10px;background:#c8c8c8;border-radius:1px"></div>
<div class="a" style="left:790px;top:52px;width:3px;height:10px;background:#c8c8c8;border-radius:1px"></div>
<svg style="left:816px;top:52px;width:11px;height:11px" viewBox="0 0 11 11"><path d="M0.5,0.5 L7,5.5 L0.5,10.5 Z" fill="#a8a8a8"/><rect x="8" y="0.5" width="2.5" height="10" fill="#a8a8a8"/></svg>
<svg style="left:1355px;top:51px;width:13px;height:13px" viewBox="0 0 13 13"><path d="M2.2,4.2 A5,5 0 1 1 1.8,8" fill="none" stroke="#d0d0d0" stroke-width="1.4"/><path d="M0.5,2 L0.8,5.4 L4.2,5" fill="none" stroke="#d0d0d0" stroke-width="1.3"/><path d="M6.5,4 L6.5,7 L8.5,7.5" fill="none" stroke="#d0d0d0" stroke-width="1.5"/></svg>
<svg style="left:1392px;top:51px;width:10px;height:13px" viewBox="0 0 10 13"><circle cx="6.5" cy="6.5" r="5" fill="none" stroke="#c8c8c8" stroke-width="1.4"/></svg>

<!-- PANEL TABS -->
<svg style="left:195px;top:76px;width:11px;height:11px" viewBox="0 0 11 11"><path d="M3.5,0 L3.5,11 M7.5,0 L7.5,11 M0,3.5 L11,3.5 M0,7.5 L11,7.5" stroke="#d0d0d0" stroke-width="1.3"/></svg>
<div class="t" style="left:211.5px;top:76.8px;color:#d0d0d0">Scene</div>
<svg style="left:692px;top:76px;width:4px;height:12px"><use href="#dots"/></svg>
<svg style="left:718px;top:78.5px;width:14px;height:8px" viewBox="0 0 14 8"><path d="M3.5,0.5 L10.5,0.5 Q13.5,0.5 13.5,4 Q13.5,7.5 10.5,7.5 L3.5,7.5 Q0.5,7.5 0.5,4 Q0.5,0.5 3.5,0.5 Z" fill="#d0d0d0"/><path d="M2.3,4 L5.3,4 M3.8,2.5 L3.8,5.5" stroke="#3c3c3c" stroke-width="1.1"/><circle cx="9.5" cy="3" r="0.9" fill="#3c3c3c"/><circle cx="11" cy="4.8" r="0.9" fill="#3c3c3c"/></svg>
<div class="t" style="left:735.7px;top:76.8px;color:#d0d0d0">Game</div>
<svg style="left:1193px;top:76px;width:4px;height:12px"><use href="#dots"/></svg>
<svg style="left:1219px;top:77.5px;width:10px;height:10px" viewBox="0 0 10 10"><circle cx="5" cy="5" r="5" fill="#d0d0d0"/><rect x="4.3" y="4.2" width="1.5" height="4" fill="#3c3c3c"/><circle cx="5" cy="2.6" r="0.9" fill="#3c3c3c"/></svg>
<div class="t" style="left:1234px;top:76.8px;color:#d0d0d0">Inspector</div>

<!-- SCENE TOOLBAR -->
<div class="a" style="left:193px;top:96px;width:1px;height:16px;background:#5e5e5e"></div>
<div class="a" style="left:196px;top:96px;width:1px;height:16px;background:#5e5e5e"></div>
<div class="a" style="left:204px;top:94px;width:38px;height:20px;background:#4f4f4f;border-radius:3px"></div>
<svg style="left:208px;top:97px;width:14px;height:14px" viewBox="0 0 14 14"><rect x="0.7" y="0.7" width="12.6" height="12.6" fill="none" stroke="#d0d0d0" stroke-width="1.1"/><path d="M2.5,11.5 L11.5,2.5" stroke="#aaa" stroke-width="0.9" stroke-dasharray="1.5,1"/><circle cx="7" cy="7" r="2.6" fill="#4f4f4f" stroke="#e8583a" stroke-width="1.2"/></svg>
<svg style="left:228px;top:102px;width:8px;height:5px"><use href="#dd"/></svg>
<div class="a" style="left:246px;top:94px;width:38px;height:20px;background:#4f4f4f;border-radius:3px"></div>
<svg style="left:250px;top:97px;width:15px;height:15px" viewBox="0 0 15 15"><path d="M6.5,0.8 L12,3 L12,10.5 L6.5,13.5 L1,10.5 L1,3 Z M1,3 L6.5,5.5 L12,3 M6.5,5.5 L6.5,13.5" fill="none" stroke="#d0d0d0" stroke-width="0.9"/><circle cx="11" cy="11" r="2.6" fill="#4f4f4f" stroke="#e8583a" stroke-width="1.2"/></svg>
<svg style="left:270px;top:102px;width:8px;height:5px"><use href="#dd"/></svg>
<div class="a" style="left:294px;top:96px;width:1px;height:16px;background:#5e5e5e"></div>
<div class="a" style="left:297px;top:96px;width:1px;height:16px;background:#5e5e5e"></div>
<div class="a" style="left:305px;top:94px;width:22px;height:20px;background:#3e5c80;border-radius:3px 0 0 3px"></div>
<div class="a" style="left:328px;top:94px;width:14px;height:20px;background:#3e5c80;border-radius:0 3px 3px 0"></div>
<svg style="left:309px;top:97px;width:14px;height:14px" viewBox="0 0 14 14"><path d="M3,0.5 L3,13.5 M7,0.5 L7,8 M0.5,3.5 L10,3.5 M0.5,7.5 L8,7.5 M0.5,11 L6,11" stroke="#e0e0e0" stroke-width="1.2"/><path d="M7.5,7 L10,10.5 L12.5,7 M10,10.5 L10,14" fill="none" stroke="#e0e0e0" stroke-width="1.7"/></svg>
<svg style="left:331px;top:102px;width:8px;height:5px"><use href="#dd"/></svg>
<div class="a" style="left:346px;top:94px;width:21px;height:20px;background:#454545;border-radius:3px 0 0 3px"></div>
<div class="a" style="left:368px;top:94px;width:15px;height:20px;background:#454545;border-radius:0 3px 3px 0"></div>
<svg style="left:350px;top:97px;width:14px;height:14px" viewBox="0 0 14 14"><path d="M3,0.5 L3,13.5 M7,0.5 L7,8 M0.5,3.5 L10,3.5 M0.5,7.5 L8,7.5" stroke="#8a8a8a" stroke-width="1"/><path d="M8,9 L8,11 Q8,13 10,13 Q12,13 12,11 L12,9" fill="none" stroke="#d8583a" stroke-width="1.7"/></svg>
<svg style="left:372px;top:102px;width:8px;height:5px" viewBox="0 0 10 6"><path d="M0,0 L10,0 L5,6 Z" fill="#7a7a7a"/></svg>
<div class="a" style="left:387px;top:94px;width:38px;height:20px;background:#4f4f4f;border-radius:3px"></div>
<svg style="left:391px;top:97px;width:14px;height:14px" viewBox="0 0 14 14"><path d="M1,1 L1,13 M4,3 L4,11 M7,1 L7,13 M10,3 L10,11 M13,1 L13,13 M0.5,7 L13.5,7" stroke="#d0d0d0" stroke-width="1"/></svg>
<svg style="left:411px;top:102px;width:8px;height:5px"><use href="#dd"/></svg>
<div class="a" style="left:435px;top:96px;width:1px;height:16px;background:#5e5e5e"></div>
<div class="a" style="left:438px;top:96px;width:1px;height:16px;background:#5e5e5e"></div>
<div class="a" style="left:446px;top:94px;width:38px;height:20px;background:#4f4f4f;border-radius:3px"></div>
<svg style="left:450px;top:97px;width:14px;height:14px" viewBox="0 0 14 14"><circle cx="7" cy="7" r="6" fill="none" stroke="#d0d0d0" stroke-width="1.1"/><path d="M3,11.5 Q9,12 12,6 Q12,12 7,13 Z" fill="#d0d0d0"/></svg>
<svg style="left:470px;top:102px;width:8px;height:5px"><use href="#dd"/></svg>
<div class="a" style="left:488px;top:94px;width:32px;height:20px;background:#4f4f4f;border-radius:3px"></div>
<div class="t" style="left:496px;top:98.5px;font-size:11px;font-weight:bold;color:#d0d0d0">2D</div>
<div class="a" style="left:524px;top:94px;width:32px;height:20px;background:#3e5c80;border-radius:3px"></div>
<svg style="left:534px;top:97px;width:11px;height:14px" viewBox="0 0 11 14"><path d="M5.5,0.5 Q10.5,0.5 10.5,5.2 Q10.5,7.5 8.2,9.5 L8.2,11 L2.8,11 L2.8,9.5 Q0.5,7.5 0.5,5.2 Q0.5,0.5 5.5,0.5 Z" fill="#f0f0f0"/><rect x="3.2" y="11.6" width="4.6" height="2" fill="#f0f0f0"/></svg>
<div class="a" style="left:560px;top:94px;width:32px;height:20px;background:#4f4f4f;border-radius:3px"></div>
<svg style="left:570px;top:97px;width:13px;height:14px" viewBox="0 0 13 14"><path d="M0.5,4 L3,4 L6,1 L6,13 L3,10 L0.5,10 Z" fill="#c8c8c8"/><path d="M7.5,7.5 L12,12 M12,7.5 L7.5,12" stroke="#c8c8c8" stroke-width="1.3"/></svg>
<div class="a" style="left:596px;top:94px;width:22px;height:20px;background:#4f4f4f;border-radius:3px 0 0 3px"></div>
<div class="a" style="left:619px;top:94px;width:14px;height:20px;background:#4f4f4f;border-radius:0 3px 3px 0"></div>
<svg style="left:600px;top:97px;width:14px;height:14px" viewBox="0 0 14 14"><path d="M0.5,8 L6,5.5 L11,8 L6,10.5 Z M0.5,10.5 L6,13 L11,10.5" fill="#d0d0d0" stroke="#d0d0d0" stroke-width="0.8"/><path d="M10,0.5 L11,3 L13.5,4 L11,5 L10,7.5 L9,5 L6.5,4 L9,3 Z" fill="#d0d0d0"/></svg>
<svg style="left:622px;top:102px;width:8px;height:5px"><use href="#dd"/></svg>
<div class="a" style="left:637px;top:94px;width:32px;height:20px;background:#3e5c80;border-radius:3px"></div>
<svg style="left:646px;top:97px;width:15px;height:14px" viewBox="0 0 15 14"><path d="M0.8,7 Q7.5,0 14.2,7 Q7.5,14 0.8,7 Z" fill="none" stroke="#f0f0f0" stroke-width="1.5"/><circle cx="7.5" cy="7" r="2.3" fill="#f0f0f0"/><path d="M2,13 L13,1" stroke="#f0f0f0" stroke-width="1.5"/></svg>
<div class="a" style="left:673px;top:94px;width:36px;height:20px;background:#4f4f4f;border-radius:3px 0 0 3px"></div>
<svg style="left:676px;top:99px;width:14px;height:10px" viewBox="0 0 14 10"><rect x="0.5" y="0.5" width="8.5" height="9" fill="#c8c8c8"/><path d="M9.5,3.5 L13.5,1 L13.5,9 L9.5,6.5 Z" fill="#c8c8c8"/></svg>
<svg style="left:696px;top:102px;width:8px;height:5px"><use href="#dd"/></svg>

<!-- GAME TOOLBAR -->
<div class="a" style="left:801px;top:91px;width:1px;height:20px;background:#2a2a2a"></div>
<div class="a" style="left:802px;top:91px;width:5px;height:20px;background:#383838"></div>
<div class="a" style="left:807px;top:91px;width:1px;height:20px;background:#2a2a2a"></div>
<div class="a" style="left:967px;top:91px;width:1px;height:20px;background:#2a2a2a"></div>
<div class="a" style="left:1089px;top:91px;width:1px;height:20px;background:#2a2a2a"></div>
<div class="a" style="left:1198px;top:91px;width:1px;height:20px;background:#2a2a2a"></div>
<div class="t" style="left:715.7px;top:96.4px">Game</div>
<svg style="left:789px;top:99px;width:8px;height:5px"><use href="#dd"/></svg>
<div class="t" style="left:811px;top:96.4px">16:9 Aspect</div>
<svg style="left:955px;top:99px;width:8px;height:5px"><use href="#dd"/></svg>
<div class="t" style="left:974px;top:96.4px">Scale</div>
<div class="a" style="left:1017px;top:101px;width:25px;height:1px;background:#6a6a6a"></div>
<div class="a" style="left:1012px;top:96.5px;width:10px;height:10px;border-radius:50%;background:#999"></div>
<div class="t" style="left:1048px;top:96.4px">1x</div>
<div class="t" style="left:1093px;top:96.4px">Play Focused</div>
<svg style="left:1187px;top:99px;width:8px;height:5px"><use href="#dd"/></svg>
<div class="a" style="left:1205px;top:97px;width:2px;height:8px;background:#e0e0e0"></div>

<!-- PROJECT PANEL -->
<div class="a" style="left:0;top:619px;width:1208px;height:374px;background:#383838"></div>
<div class="a" style="left:0;top:619px;width:1208px;height:19px;background:#282828"></div>
<div class="a" style="left:0;top:619px;width:67px;height:19px;background:#3c3c3c;border-top-right-radius:3px"></div>
<div class="a" style="left:0;top:638px;width:1208px;height:21px;background:#3c3c3c;border-bottom:1px solid #232323"></div>
<div class="a" style="left:181px;top:659px;width:13px;height:334px;background:#303030"></div>
<div class="a" style="left:194px;top:659px;width:1px;height:334px;background:#242424"></div>
<div class="a" style="left:195px;top:659px;width:1013px;height:20px;background:#3c3c3c;border-bottom:1px solid #2a2a2a"></div>
<div class="a" style="left:195px;top:679px;width:1013px;height:293px;background:#333333"></div>
<div class="a" style="left:195px;top:972px;width:1013px;height:21px;background:#3e3e3e;border-top:1px solid #2a2a2a"></div>


<!-- INSPECTOR CONTENT -->
<div class="a" style="left:1210px;top:91px;width:184px;height:54px;background:#3e3e3e;border-bottom:1px solid #242424"></div>
<svg style="left:1222px;top:99px;width:20px;height:28px" viewBox="0 0 20 28"><path d="M1.5,0 L12,0 L20,8 L20,26.5 Q20,28 18.5,28 L1.5,28 Q0,28 0,26.5 L0,1.5 Q0,0 1.5,0 Z" fill="#eeeeee"/></svg>
<div class="t" style="left:1256.5px;top:97.6px;font-size:13.5px;color:#a8a8a8">Package 'WebGL Publisher'</div>
<div class="a" style="left:1391px;top:120px;width:8px;height:17px;background:#4a4a4a;border-radius:2px"></div>
<div class="t" style="left:1229.2px;top:151.6px;font-size:12.2px;font-weight:bold;color:#8f8f8f">Information</div>
<div class="a" style="left:1228px;top:167px;width:170px;height:84px;background:#3a3a3a;border-radius:3px"></div>
<div class="t" style="left:1234.4px;top:175.8px;color:#8f8f8f">Name</div>
<div class="t" style="left:1234.4px;top:195.6px;color:#8f8f8f">Display name</div>
<div class="t" style="left:1234.4px;top:215.6px;color:#8f8f8f">Version</div>
<div class="t" style="left:1234.4px;top:235.6px;color:#8f8f8f">Category</div>
<div class="a" style="left:1359px;top:171px;width:40px;height:17px;background:#2c2c2c;border:1px solid #262626;border-radius:3px"></div>
<div class="a" style="left:1359px;top:191px;width:40px;height:17px;background:#2c2c2c;border:1px solid #262626;border-radius:3px"></div>
<div class="a" style="left:1359px;top:211px;width:40px;height:17px;background:#2c2c2c;border:1px solid #262626;border-radius:3px"></div>
<div class="a" style="left:1359px;top:231px;width:40px;height:17px;background:#2c2c2c;border:1px solid #262626;border-radius:3px"></div>
<div class="t" style="left:1362px;top:175.8px;color:#8f8f8f">com.unity</div>
<div class="t" style="left:1362px;top:195.6px;color:#8f8f8f">WebGL</div>
<div class="t" style="left:1362px;top:215.6px;color:#8f8f8f">4.2.3</div>
<div class="t" style="left:1229.7px;top:258.4px;font-size:12.2px;font-weight:bold;color:#8f8f8f">Description</div>
<div class="a" style="left:1234px;top:280px;width:170px;height:92px;background:#2c2c2c;border:1px solid #262626;border-radius:3px"></div>
<div class="t" style="left:1237.7px;top:284.3px;color:#8f8f8f">This tool allows you to make a</div>
<div class="t" style="left:1237.7px;top:299.4px;color:#8f8f8f">project and upload it to Unity</div>
<div class="t" style="left:1237.7px;top:314.2px;color:#8f8f8f">shared with others.</div>
<div class="t" style="left:1229.7px;top:383.4px;font-size:12.2px;font-weight:bold;color:#8f8f8f">Dependencies</div>
<div class="a" style="left:1228.5px;top:399px;width:170px;height:70px;background:#363636;border:1px solid #2e2e2e;border-radius:3px"></div>
<div class="a" style="left:1229px;top:400px;width:170px;height:18px;background:#3c3c3c;border-bottom:1px solid #2e2e2e"></div>
<div class="t" style="left:1239.3px;top:403.1px;color:#8f8f8f">Package name</div>
<div class="t" style="left:1240px;top:427.4px;color:#8f8f8f">Editor Coroutines</div>
<div class="t" style="left:1240px;top:448.8px;color:#8f8f8f">Settings Manager</div>

<!-- PROJECT CONTENT -->
<svg style="left:-7px;top:624px;width:14px;height:11px"><use href="#fold"/></svg>
<div class="t" style="left:10.3px;top:624.4px;color:#d0d0d0">Project</div>
<svg style="left:77px;top:623px;width:10px;height:11px" viewBox="0 0 10 11"><rect x="0" y="0" width="10" height="11" rx="1" fill="#d0d0d0"/><rect x="1.8" y="2" width="6.4" height="1.2" fill="#282828"/><rect x="1.8" y="4.5" width="6.4" height="1.2" fill="#282828"/><rect x="1.8" y="7" width="4.2" height="1.2" fill="#282828"/></svg>
<div class="t" style="left:92px;top:624.4px;color:#d0d0d0">Console</div>
<svg style="left:1173px;top:623px;width:9px;height:11px"><use href="#lock"/></svg>
<svg style="left:1193px;top:623px;width:4px;height:12px"><use href="#dots"/></svg>
<div class="a" style="left:0;top:647px;width:7px;height:1.6px;background:#c4c4c4"></div>
<div class="a" style="left:2.5px;top:643px;width:1.6px;height:9px;background:#c4c4c4"></div>
<svg style="left:10px;top:646px;width:8px;height:5px"><use href="#dd"/></svg>
<div class="a" style="left:776px;top:641px;width:316px;height:15px;background:#2a2a2a;border:1px solid #222;border-radius:3px"></div>
<svg style="left:781px;top:645px;width:7px;height:7px"><use href="#search"/></svg>
<svg style="left:1077px;top:642px;width:12px;height:12px" viewBox="0 0 12 12"><rect x="4.5" y="0.8" width="6.7" height="6.7" fill="none" stroke="#c4c4c4" stroke-width="1"/><rect x="0.8" y="5.5" width="5.5" height="5.5" fill="#2a2a2a" stroke="#c4c4c4" stroke-width="1"/><path d="M5,7 L9,3 M6.5,3 L9,3 L9,5.5" fill="none" stroke="#c4c4c4" stroke-width="1"/></svg>
<div class="a" style="left:1096px;top:638px;width:1px;height:20px;background:#2c2c2c"></div>
<div class="a" style="left:1121px;top:638px;width:1px;height:20px;background:#2c2c2c"></div>
<div class="a" style="left:1147px;top:638px;width:1px;height:20px;background:#2c2c2c"></div>
<div class="a" style="left:1173px;top:638px;width:1px;height:20px;background:#2c2c2c"></div>
<svg style="left:1101px;top:641px;width:13px;height:14px" viewBox="0 0 13 14"><rect x="1" y="0.5" width="6" height="6" fill="#c8c8c8"/><circle cx="4" cy="10" r="3.5" fill="#c8c8c8"/><path d="M9,4 L12.8,11 L5.8,11 Z" fill="#c8c8c8"/></svg>
<svg style="left:1127px;top:642px;width:13px;height:12px" viewBox="0 0 13 12"><path d="M6,0.5 L12.5,0.5 L12.5,6.5 L6.5,11.8 L0.5,6 Z" fill="#c8c8c8"/><circle cx="9.5" cy="3.5" r="1.2" fill="#3c3c3c"/></svg>
<svg style="left:1153px;top:641px;width:13px;height:13px" viewBox="0 0 13 13"><path d="M6.5,0.5 L8.3,4.6 L12.7,4.8 L9.3,7.6 L10.4,12 L6.5,9.6 L2.6,12 L3.7,7.6 L0.3,4.8 L4.7,4.6 Z" fill="#8a8a8a"/></svg>
<svg style="left:1179px;top:642px;width:15px;height:12px" viewBox="0 0 15 12"><path d="M0.8,6 Q7.5,-0.5 14.2,6 Q7.5,12.5 0.8,6 Z" fill="none" stroke="#c8c8c8" stroke-width="1.4"/><circle cx="7.5" cy="6" r="2" fill="#c8c8c8"/><path d="M2,11.5 L13,0.5" stroke="#c8c8c8" stroke-width="1.4"/></svg>
<div class="t" style="left:1196px;top:642px;font-size:12px;color:#c8c8c8">4</div>
<!-- tree -->
<div class="a" style="left:0;top:834px;width:181px;height:16px;background:#474747"></div>
<svg style="left:5px;top:661px;width:12px;height:12px" viewBox="0 0 13 13"><path d="M6.5,0.5 L8.3,4.6 L12.7,4.8 L9.3,7.6 L10.4,12 L6.5,9.6 L2.6,12 L3.7,7.6 L0.3,4.8 L4.7,4.6 Z" fill="#d0d0d0"/></svg>
<div class="t" style="left:22.3px;top:661.5px;font-weight:bold;color:#d2d2d2">Favorites</div>
<svg style="left:19px;top:677px;width:12px;height:12px"><use href="#search"/></svg>
<div class="t" style="left:35.3px;top:677.4px">All Materials</div>
<svg style="left:19px;top:693px;width:12px;height:12px"><use href="#search"/></svg>
<div class="t" style="left:35.3px;top:693.4px">All Models</div>
<svg style="left:19px;top:709px;width:12px;height:12px"><use href="#search"/></svg>
<div class="t" style="left:35.3px;top:709.4px">All Prefabs</div>
<svg style="left:5px;top:741px;width:14px;height:11px"><use href="#foldopen"/></svg>
<div class="t" style="left:22.3px;top:740.4px;font-weight:bold;color:#d2d2d2">Assets</div>
<svg style="left:5px;top:757px;width:9px;height:9px"><use href="#tri_d"/></svg>
<svg style="left:19px;top:757px;width:14px;height:11px"><use href="#foldopen"/></svg>
<div class="t" style="left:35.3px;top:756.4px">Challenge 3</div>
<svg style="left:33px;top:773px;width:13px;height:11px"><use href="#fold"/></svg>
<div class="t" style="left:49.3px;top:772.4px">_Source_Files</div>
<svg style="left:33px;top:789px;width:13px;height:11px"><use href="#fold"/></svg>
<div class="t" style="left:49.3px;top:788.4px">Instructions</div>
<svg style="left:33px;top:805px;width:13px;height:11px"><use href="#fold"/></svg>
<div class="t" style="left:49.3px;top:804.4px">Prefabs</div>
<svg style="left:33px;top:821px;width:13px;height:11px"><use href="#fold"/></svg>
<div class="t" style="left:49.3px;top:820.4px">Scripts</div>
<svg style="left:33px;top:837px;width:13px;height:11px"><use href="#fold"/></svg>
<div class="t" style="left:49.3px;top:836.4px">Sound</div>
<svg style="left:5px;top:853px;width:9px;height:9px"><use href="#tri_r"/></svg>
<svg style="left:19px;top:853px;width:13px;height:11px"><use href="#fold"/></svg>
<div class="t" style="left:35.3px;top:852.4px">Course Library</div>
<svg style="left:19px;top:869px;width:13px;height:11px"><use href="#foldo"/></svg>
<div class="t" style="left:35.3px;top:868.4px">Scenes</div>
<svg style="left:5px;top:885px;width:14px;height:11px"><use href="#foldopen"/></svg>
<div class="t" style="left:22.3px;top:884.4px;font-weight:bold;color:#d2d2d2">Packages</div>
<svg style="left:5px;top:901px;width:9px;height:9px"><use href="#tri_r"/></svg>
<svg style="left:19px;top:901px;width:13px;height:11px"><use href="#fold"/></svg>
<div class="t" style="left:35.3px;top:900.4px">Code Coverage</div>
<svg style="left:5px;top:917px;width:9px;height:9px"><use href="#tri_r"/></svg>
<svg style="left:19px;top:917px;width:13px;height:11px"><use href="#fold"/></svg>
<div class="t" style="left:35.3px;top:916.4px">Custom NUnit</div>
<svg style="left:5px;top:933px;width:9px;height:9px"><use href="#tri_r"/></svg>
<svg style="left:19px;top:933px;width:13px;height:11px"><use href="#fold"/></svg>
<div class="t" style="left:35.3px;top:932.4px">Editor Coroutines</div>
<svg style="left:5px;top:949px;width:9px;height:9px"><use href="#tri_r"/></svg>
<svg style="left:19px;top:949px;width:13px;height:11px"><use href="#fold"/></svg>
<div class="t" style="left:35.3px;top:948.4px">JetBrains Rider Editor</div>
<svg style="left:5px;top:965px;width:9px;height:9px"><use href="#tri_r"/></svg>
<svg style="left:19px;top:965px;width:13px;height:11px"><use href="#fold"/></svg>
<div class="t" style="left:35.3px;top:964.4px">Profile Analyzer</div>
<svg style="left:5px;top:981px;width:9px;height:9px"><use href="#tri_r"/></svg>
<svg style="left:19px;top:981px;width:13px;height:11px"><use href="#fold"/></svg>
<div class="t" style="left:35.3px;top:980.4px">Settings Manager</div>
<!-- scrollbar -->
<svg style="left:183px;top:663px;width:9px;height:6px" viewBox="0 0 10 6"><path d="M0,6 L10,6 L5,0 Z" fill="#c4c4c4"/></svg>
<div class="a" style="left:183px;top:675px;width:10px;height:213px;background:#5e5e5e;border-radius:5px"></div>
<svg style="left:183px;top:983px;width:9px;height:6px"><use href="#dd"/></svg>
<!-- breadcrumb -->
<div class="t" style="left:199.5px;top:663.4px">Assets</div>
<svg style="left:243px;top:664px;width:6px;height:10px"><use href="#chev"/></svg>
<div class="t" style="left:254.4px;top:663.4px">Challenge 3</div>
<svg style="left:329px;top:664px;width:6px;height:10px"><use href="#chev"/></svg>
<div class="t" style="left:340.2px;top:663.4px;font-weight:bold;color:#d2d2d2">Sound</div>
<!-- thumbs -->
<div class="a" style="left:212px;top:692px;width:60px;height:60px;background:#535353;box-shadow:0 0 1px 1px #2a2a2a"></div>
<div class="a" style="left:288px;top:692px;width:60px;height:60px;background:#535353;box-shadow:0 0 1px 1px #2a2a2a"></div>
<div class="a" style="left:364px;top:692px;width:60px;height:60px;background:#535353;box-shadow:0 0 1px 1px #2a2a2a"></div>
<div class="a" style="left:440px;top:692px;width:60px;height:60px;background:#535353;box-shadow:0 0 1px 1px #2a2a2a"></div>
<svg style="left:212px;top:692px;width:60px;height:60px" viewBox="0 0 60 60"><path d="M1.0,27.6 L1.5,27.1 L2.0,26.3 L2.5,27.0 L3.0,26.5 L3.5,25.3 L3.9,25.8 L4.4,26.4 L4.9,26.8 L5.4,27.4 L5.9,27.1 L6.4,26.6 L6.9,27.0 L7.4,26.0 L7.9,26.2 L8.4,26.3 L8.9,27.0 L9.4,27.3 L9.8,27.3 L10.3,28.0 L10.8,26.8 L11.3,26.9 L11.8,26.9 L12.3,27.1 L12.8,26.9 L13.3,27.0 L13.8,27.1 L14.3,27.6 L14.8,27.7 L15.3,27.4 L15.7,27.3 L16.2,27.0 L16.7,27.5 L17.2,26.9 L17.7,27.9 L18.2,27.8 L18.7,28.1 L19.2,28.0 L19.7,28.0 L20.2,27.7 L20.7,27.3 L21.2,27.6 L21.6,27.8 L22.1,27.7 L22.6,28.2 L23.1,28.1 L23.6,28.6 L24.1,28.5 L24.6,27.9 L25.1,28.1 L25.6,27.8 L26.1,27.9 L26.6,27.7 L27.1,28.2 L27.5,28.5 L28.0,28.3 L28.5,28.6 L29.0,28.5 L29.5,28.6 L30.0,28.2 L30.5,28.2 L31.0,28.2 L31.5,28.3 L32.0,28.8 L32.5,28.6 L32.9,28.9 L33.4,28.7 L33.9,28.7 L34.4,28.6 L34.9,28.6 L35.4,28.4 L35.9,28.6 L36.4,28.8 L36.9,28.8 L37.4,29.1 L37.9,28.9 L38.4,28.9 L38.8,28.7 L39.3,28.7 L39.8,28.9 L40.3,28.7 L40.8,29.0 L41.3,29.0 L41.8,29.0 L42.3,29.2 L42.8,29.0 L43.3,29.0 L43.8,29.1 L44.3,29.0 L44.7,29.1 L45.2,29.1 L45.7,29.0 L46.2,29.2 L46.7,29.0 L47.2,29.1 L47.7,29.0 L48.2,29.1 L48.7,29.1 L49.2,29.1 L49.7,29.2 L50.2,29.1 L50.6,29.0 L51.1,29.0 L51.6,29.0 L52.1,29.0 L52.6,29.2 L53.1,29.2 L53.6,29.1 L54.1,29.1 L54.6,29.1 L55.1,29.1 L55.6,29.1 L56.1,29.1 L56.5,29.1 L57.0,29.2 L57.5,29.0 L58.0,29.0 L58.5,29.1 L59.0,29.2 L59.0,29.9 L58.5,30.0 L58.0,29.8 L57.5,30.0 L57.0,30.0 L56.5,30.0 L56.1,29.8 L55.6,30.0 L55.1,30.0 L54.6,29.9 L54.1,30.0 L53.6,29.9 L53.1,29.9 L52.6,29.9 L52.1,29.9 L51.6,30.0 L51.1,29.9 L50.6,29.8 L50.2,29.9 L49.7,29.8 L49.2,29.9 L48.7,29.9 L48.2,30.0 L47.7,29.8 L47.2,30.0 L46.7,30.0 L46.2,30.0 L45.7,29.8 L45.2,29.9 L44.7,29.9 L44.3,29.9 L43.8,29.9 L43.3,29.9 L42.8,30.0 L42.3,29.9 L41.8,30.0 L41.3,29.9 L40.8,30.0 L40.3,30.1 L39.8,30.2 L39.3,30.1 L38.8,30.2 L38.4,30.1 L37.9,30.0 L37.4,30.0 L36.9,30.1 L36.4,30.2 L35.9,30.5 L35.4,30.2 L34.9,30.4 L34.4,30.5 L33.9,30.3 L33.4,30.2 L32.9,30.2 L32.5,30.5 L32.0,30.2 L31.5,30.7 L31.0,30.6 L30.5,30.7 L30.0,30.5 L29.5,30.7 L29.0,30.6 L28.5,30.2 L28.0,30.5 L27.5,30.5 L27.1,31.0 L26.6,31.0 L26.1,31.1 L25.6,31.1 L25.1,31.0 L24.6,30.8 L24.1,30.9 L23.6,30.8 L23.1,30.6 L22.6,31.0 L22.1,30.8 L21.6,31.0 L21.2,31.8 L20.7,31.7 L20.2,31.0 L19.7,30.6 L19.2,30.5 L18.7,31.3 L18.2,31.0 L17.7,31.9 L17.2,32.2 L16.7,31.2 L16.2,31.8 L15.7,31.2 L15.3,31.3 L14.8,31.4 L14.3,30.9 L13.8,32.1 L13.3,32.3 L12.8,32.5 L12.3,32.2 L11.8,31.9 L11.3,31.7 L10.8,31.6 L10.3,31.1 L9.8,31.0 L9.4,32.3 L8.9,32.5 L8.4,33.0 L7.9,33.0 L7.4,32.4 L6.9,31.7 L6.4,32.2 L5.9,31.2 L5.4,31.8 L4.9,32.4 L4.4,31.9 L3.9,32.7 L3.5,32.8 L3.0,32.4 L2.5,33.3 L2.0,31.8 L1.5,32.2 L1.0,31.7 Z" fill="#f0b400" stroke="#f0b400" stroke-width="0.4"/></svg>
<svg style="left:288px;top:692px;width:60px;height:60px" viewBox="0 0 60 60"><path d="M1.0,26.8 L1.5,26.0 L2.0,25.0 L2.5,26.4 L3.0,26.5 L3.5,25.5 L3.9,27.4 L4.4,26.9 L4.9,26.6 L5.4,26.1 L5.9,26.9 L6.4,27.3 L6.9,27.1 L7.4,27.7 L7.9,27.1 L8.4,26.5 L8.9,26.6 L9.4,27.3 L9.8,27.6 L10.3,27.8 L10.8,27.5 L11.3,27.3 L11.8,27.9 L12.3,27.7 L12.8,27.6 L13.3,27.8 L13.8,28.1 L14.3,28.1 L14.8,27.7 L15.3,27.7 L15.7,28.0 L16.2,28.6 L16.7,28.5 L17.2,27.9 L17.7,28.4 L18.2,28.0 L18.7,28.7 L19.2,28.8 L19.7,28.4 L20.2,28.1 L20.7,28.2 L21.2,28.3 L21.6,28.5 L22.1,28.7 L22.6,28.9 L23.1,28.6 L23.6,28.7 L24.1,28.7 L24.6,28.6 L25.1,28.9 L25.6,28.9 L26.1,28.9 L26.6,28.6 L27.1,28.7 L27.5,28.8 L28.0,28.9 L28.5,29.0 L29.0,28.8 L29.5,29.0 L30.0,28.8 L30.5,29.0 L31.0,29.1 L31.5,29.2 L32.0,29.1 L32.5,29.0 L32.9,29.1 L33.4,29.1 L33.9,29.1 L34.4,29.2 L34.9,29.1 L35.4,29.2 L35.9,29.1 L36.4,29.2 L36.9,29.1 L37.4,29.1 L37.9,29.0 L38.4,29.1 L38.8,29.0 L39.3,29.1 L39.8,29.1 L40.3,29.2 L40.8,29.1 L41.3,29.0 L41.8,29.2 L42.3,29.2 L42.8,29.0 L43.3,29.1 L43.8,29.1 L44.3,29.1 L44.7,29.2 L45.2,29.1 L45.7,29.1 L46.2,29.2 L46.7,29.1 L47.2,29.2 L47.7,29.0 L48.2,29.1 L48.7,29.1 L49.2,29.2 L49.7,29.0 L50.2,29.0 L50.6,29.0 L51.1,29.1 L51.6,29.1 L52.1,29.1 L52.6,29.0 L53.1,29.1 L53.6,29.1 L54.1,29.1 L54.6,29.1 L55.1,29.1 L55.6,29.2 L56.1,29.1 L56.5,29.0 L57.0,29.1 L57.5,29.1 L58.0,29.1 L58.5,29.1 L59.0,29.2 L59.0,29.9 L58.5,29.8 L58.0,29.9 L57.5,29.9 L57.0,29.9 L56.5,29.8 L56.1,29.8 L55.6,30.0 L55.1,29.9 L54.6,29.8 L54.1,29.9 L53.6,29.9 L53.1,29.8 L52.6,29.9 L52.1,30.0 L51.6,30.0 L51.1,29.9 L50.6,30.0 L50.2,29.9 L49.7,29.8 L49.2,30.0 L48.7,29.9 L48.2,29.8 L47.7,29.9 L47.2,29.9 L46.7,29.9 L46.2,29.9 L45.7,29.9 L45.2,29.9 L44.7,30.0 L44.3,29.8 L43.8,29.9 L43.3,30.0 L42.8,30.0 L42.3,29.9 L41.8,29.9 L41.3,29.8 L40.8,30.0 L40.3,29.9 L39.8,29.8 L39.3,30.0 L38.8,29.9 L38.4,29.9 L37.9,29.9 L37.4,30.0 L36.9,29.9 L36.4,30.0 L35.9,30.0 L35.4,29.9 L34.9,29.9 L34.4,29.8 L33.9,29.9 L33.4,30.0 L32.9,30.0 L32.5,30.1 L32.0,29.9 L31.5,29.9 L31.0,29.9 L30.5,30.1 L30.0,30.1 L29.5,30.2 L29.0,30.0 L28.5,30.0 L28.0,30.0 L27.5,30.2 L27.1,30.1 L26.6,30.2 L26.1,30.2 L25.6,30.1 L25.1,30.1 L24.6,30.2 L24.1,30.4 L23.6,30.3 L23.1,30.5 L22.6,30.2 L22.1,30.4 L21.6,30.2 L21.2,30.6 L20.7,30.4 L20.2,30.7 L19.7,30.7 L19.2,30.5 L18.7,30.8 L18.2,30.6 L17.7,30.6 L17.2,30.6 L16.7,30.6 L16.2,30.7 L15.7,30.9 L15.3,31.2 L14.8,31.5 L14.3,31.5 L13.8,31.1 L13.3,31.1 L12.8,31.0 L12.3,31.7 L11.8,31.5 L11.3,31.8 L10.8,31.3 L10.3,31.5 L9.8,31.6 L9.4,31.6 L8.9,32.2 L8.4,32.0 L7.9,32.2 L7.4,31.4 L6.9,31.6 L6.4,32.3 L5.9,32.3 L5.4,32.5 L4.9,32.9 L4.4,32.1 L3.9,32.1 L3.5,33.3 L3.0,32.4 L2.5,32.7 L2.0,32.4 L1.5,33.0 L1.0,32.6 Z" fill="#f0b400" stroke="#f0b400" stroke-width="0.4"/></svg>
<svg style="left:364px;top:692px;width:60px;height:60px" viewBox="0 0 60 60"><path d="M1.0,23.0 L1.4,22.0 L1.8,24.7 L2.2,19.2 L2.5,21.7 L2.9,18.7 L3.3,22.5 L3.7,20.3 L4.1,22.1 L4.5,24.6 L4.9,24.8 L5.3,18.5 L5.6,24.4 L6.0,22.8 L6.4,20.2 L6.8,22.7 L7.2,24.7 L7.6,24.6 L8.0,26.9 L8.3,24.8 L8.7,24.0 L9.1,22.5 L9.5,24.2 L9.9,23.3 L10.3,22.6 L10.7,21.1 L11.1,22.7 L11.4,26.9 L11.8,22.3 L12.2,23.4 L12.6,25.9 L13.0,27.1 L13.4,23.6 L13.8,24.5 L14.1,23.4 L14.5,24.6 L14.9,28.1 L15.3,27.8 L15.7,27.0 L16.1,27.4 L16.5,25.6 L16.9,24.6 L17.2,23.9 L17.6,24.5 L18.0,24.0 L18.4,23.6 L18.8,24.1 L19.2,27.3 L19.6,27.6 L19.9,27.3 L20.3,25.0 L20.7,26.5 L21.1,27.2 L21.5,25.9 L21.9,28.1 L22.3,26.9 L22.7,28.2 L23.0,27.7 L23.4,28.9 L23.8,26.7 L24.2,27.3 L24.6,28.0 L25.0,27.2 L25.4,28.4 L25.7,27.9 L26.1,28.3 L26.5,27.0 L26.9,26.2 L27.3,27.3 L27.7,28.6 L28.1,28.1 L28.5,27.6 L28.8,27.5 L29.2,28.8 L29.6,27.9 L30.0,28.1 L30.4,27.8 L30.8,28.8 L31.2,27.6 L31.5,28.4 L31.9,27.5 L32.3,27.6 L32.7,28.9 L33.1,28.5 L33.5,28.8 L33.9,26.8 L34.3,26.7 L34.6,27.2 L35.0,27.1 L35.4,28.5 L35.8,27.5 L36.2,28.8 L36.6,29.2 L37.0,29.0 L37.3,28.5 L37.7,28.7 L38.1,28.4 L38.5,28.1 L38.9,28.7 L39.3,28.1 L39.7,28.8 L40.1,28.0 L40.4,28.0 L40.8,28.4 L41.2,28.1 L41.6,28.5 L42.0,28.2 L42.4,29.0 L42.8,28.5 L43.1,28.3 L43.5,28.5 L43.9,29.2 L44.3,29.6 L44.7,29.0 L45.1,29.2 L45.5,29.5 L45.9,29.3 L46.2,29.4 L46.6,28.8 L47.0,29.2 L47.4,29.2 L47.8,29.0 L48.2,28.7 L48.6,28.8 L48.9,29.3 L49.3,28.6 L49.7,29.5 L50.1,29.4 L50.5,29.5 L50.9,29.5 L51.3,29.3 L51.7,29.3 L52.0,29.6 L52.4,29.5 L52.8,29.2 L53.2,29.1 L53.6,29.3 L54.0,29.1 L54.4,29.4 L54.7,29.6 L55.1,29.0 L55.5,29.1 L55.9,29.5 L56.3,28.8 L56.7,29.3 L57.1,29.5 L57.5,29.1 L57.8,29.2 L58.2,29.4 L58.6,29.5 L59.0,29.4 L59.0,30.6 L58.6,30.4 L58.2,30.7 L57.8,30.9 L57.5,30.8 L57.1,30.4 L56.7,30.4 L56.3,30.6 L55.9,30.7 L55.5,30.9 L55.1,30.7 L54.7,30.8 L54.4,30.8 L54.0,30.4 L53.6,30.7 L53.2,30.5 L52.8,30.7 L52.4,30.3 L52.0,30.5 L51.7,30.8 L51.3,30.7 L50.9,31.0 L50.5,30.8 L50.1,31.3 L49.7,31.5 L49.3,30.6 L48.9,30.6 L48.6,30.7 L48.2,31.5 L47.8,31.5 L47.4,31.2 L47.0,31.7 L46.6,30.5 L46.2,31.2 L45.9,30.5 L45.5,31.0 L45.1,30.4 L44.7,30.4 L44.3,30.7 L43.9,30.8 L43.5,31.3 L43.1,31.1 L42.8,31.8 L42.4,31.9 L42.0,30.8 L41.6,32.0 L41.2,30.8 L40.8,31.0 L40.4,31.4 L40.1,31.8 L39.7,31.0 L39.3,31.5 L38.9,31.0 L38.5,31.1 L38.1,31.3 L37.7,31.3 L37.3,30.6 L37.0,31.4 L36.6,31.2 L36.2,32.1 L35.8,30.9 L35.4,32.1 L35.0,31.0 L34.6,33.1 L34.3,32.1 L33.9,31.5 L33.5,32.7 L33.1,31.1 L32.7,31.3 L32.3,31.0 L31.9,33.2 L31.5,31.1 L31.2,32.1 L30.8,31.2 L30.4,31.2 L30.0,31.4 L29.6,31.3 L29.2,31.0 L28.8,31.8 L28.5,31.6 L28.1,31.5 L27.7,34.3 L27.3,32.7 L26.9,31.6 L26.5,32.9 L26.1,31.6 L25.7,33.2 L25.4,31.9 L25.0,32.0 L24.6,31.9 L24.2,31.9 L23.8,31.6 L23.4,31.6 L23.0,31.4 L22.7,32.2 L22.3,32.1 L21.9,34.1 L21.5,32.9 L21.1,33.4 L20.7,34.5 L20.3,34.3 L19.9,34.3 L19.6,33.0 L19.2,32.3 L18.8,34.6 L18.4,34.3 L18.0,36.6 L17.6,33.7 L17.2,35.2 L16.9,34.3 L16.5,32.2 L16.1,34.5 L15.7,34.2 L15.3,31.7 L14.9,33.1 L14.5,34.7 L14.1,32.8 L13.8,37.6 L13.4,35.2 L13.0,35.9 L12.6,36.4 L12.2,36.1 L11.8,36.5 L11.4,38.5 L11.1,38.2 L10.7,36.3 L10.3,34.9 L9.9,38.9 L9.5,36.0 L9.1,34.4 L8.7,36.4 L8.3,32.0 L8.0,33.3 L7.6,35.6 L7.2,34.0 L6.8,34.1 L6.4,39.3 L6.0,40.0 L5.6,35.6 L5.3,41.0 L4.9,35.3 L4.5,37.0 L4.1,42.9 L3.7,42.0 L3.3,38.1 L2.9,37.4 L2.5,36.0 L2.2,33.9 L1.8,36.2 L1.4,35.4 L1.0,35.8 Z" fill="#f0b400" stroke="#f0b400" stroke-width="0.4"/></svg>
<svg style="left:440px;top:692px;width:60px;height:60px" viewBox="0 0 60 60"><path d="M1.0,8.6 L1.4,9.2 L1.8,8.5 L2.2,10.6 L2.5,10.9 L2.9,9.3 L3.3,9.9 L3.7,11.3 L4.1,10.6 L4.5,10.4 L4.9,9.2 L5.3,11.1 L5.6,10.2 L6.0,11.0 L6.4,9.4 L6.8,8.6 L7.2,10.3 L7.6,10.5 L8.0,9.9 L8.3,10.4 L8.7,10.6 L9.1,8.8 L9.5,10.6 L9.9,9.1 L10.3,11.0 L10.7,9.9 L11.1,11.3 L11.4,9.2 L11.8,8.6 L12.2,8.6 L12.6,10.9 L13.0,10.2 L13.4,11.3 L13.8,11.2 L14.1,10.7 L14.5,10.2 L14.9,11.3 L15.3,9.6 L15.7,8.8 L16.1,10.7 L16.5,9.2 L16.9,9.9 L17.2,9.8 L17.6,10.9 L18.0,9.5 L18.4,8.8 L18.8,9.5 L19.2,9.0 L19.6,10.2 L19.9,10.9 L20.3,9.4 L20.7,9.8 L21.1,10.4 L21.5,9.1 L21.9,8.6 L22.3,10.5 L22.7,10.2 L23.0,9.0 L23.4,9.6 L23.8,9.7 L24.2,10.0 L24.6,9.4 L25.0,11.1 L25.4,10.3 L25.7,8.8 L26.1,9.5 L26.5,8.7 L26.9,10.3 L27.3,10.5 L27.7,8.6 L28.1,10.5 L28.5,10.6 L28.8,10.7 L29.2,11.2 L29.6,10.8 L30.0,9.9 L30.4,9.0 L30.8,9.0 L31.2,10.6 L31.5,11.2 L31.9,10.0 L32.3,9.8 L32.7,10.7 L33.1,11.0 L33.5,10.9 L33.9,9.5 L34.3,11.0 L34.6,9.2 L35.0,10.9 L35.4,8.9 L35.8,8.6 L36.2,10.3 L36.6,10.3 L37.0,10.6 L37.3,11.0 L37.7,10.4 L38.1,11.2 L38.5,8.7 L38.9,8.6 L39.3,10.4 L39.7,10.0 L40.1,10.5 L40.4,10.4 L40.8,9.1 L41.2,10.1 L41.6,10.1 L42.0,9.0 L42.4,9.7 L42.8,8.9 L43.1,8.6 L43.5,10.9 L43.9,10.8 L44.3,8.6 L44.7,8.9 L45.1,11.4 L45.5,9.1 L45.9,9.4 L46.2,9.2 L46.6,9.8 L47.0,11.0 L47.4,10.5 L47.8,10.3 L48.2,10.4 L48.6,8.6 L48.9,8.9 L49.3,10.6 L49.7,10.6 L50.1,10.0 L50.5,10.4 L50.9,10.6 L51.3,10.1 L51.7,9.9 L52.0,8.5 L52.4,10.1 L52.8,11.2 L53.2,8.9 L53.6,11.3 L54.0,10.3 L54.4,10.4 L54.7,9.8 L55.1,10.2 L55.5,9.3 L55.9,10.5 L56.3,10.3 L56.7,9.5 L57.1,9.7 L57.5,10.8 L57.8,9.6 L58.2,11.2 L58.6,10.6 L59.0,9.8 L59.0,21.3 L58.6,18.7 L58.2,19.5 L57.8,19.0 L57.5,19.7 L57.1,19.0 L56.7,21.1 L56.3,19.7 L55.9,20.1 L55.5,19.6 L55.1,21.1 L54.7,21.2 L54.4,19.2 L54.0,21.4 L53.6,21.1 L53.2,20.8 L52.8,19.8 L52.4,20.4 L52.0,20.1 L51.7,21.1 L51.3,20.0 L50.9,21.4 L50.5,20.5 L50.1,20.7 L49.7,18.9 L49.3,21.4 L48.9,21.0 L48.6,21.3 L48.2,20.3 L47.8,19.5 L47.4,20.1 L47.0,20.3 L46.6,19.9 L46.2,18.8 L45.9,20.1 L45.5,21.5 L45.1,21.1 L44.7,18.9 L44.3,19.8 L43.9,18.7 L43.5,19.4 L43.1,21.0 L42.8,19.1 L42.4,21.3 L42.0,19.2 L41.6,20.1 L41.2,20.1 L40.8,20.2 L40.4,20.8 L40.1,18.6 L39.7,20.6 L39.3,21.4 L38.9,19.3 L38.5,21.5 L38.1,19.1 L37.7,21.3 L37.3,18.9 L37.0,19.0 L36.6,21.5 L36.2,18.9 L35.8,20.1 L35.4,18.7 L35.0,21.0 L34.6,19.1 L34.3,18.7 L33.9,20.5 L33.5,21.5 L33.1,21.2 L32.7,21.4 L32.3,18.7 L31.9,19.4 L31.5,19.4 L31.2,21.4 L30.8,18.6 L30.4,20.4 L30.0,20.7 L29.6,18.8 L29.2,19.2 L28.8,21.4 L28.5,19.0 L28.1,19.7 L27.7,21.3 L27.3,19.4 L26.9,21.0 L26.5,19.1 L26.1,19.1 L25.7,21.4 L25.4,20.1 L25.0,20.5 L24.6,21.2 L24.2,19.4 L23.8,20.2 L23.4,18.7 L23.0,21.3 L22.7,21.1 L22.3,20.1 L21.9,19.0 L21.5,19.9 L21.1,19.9 L20.7,19.8 L20.3,21.5 L19.9,19.1 L19.6,20.1 L19.2,20.3 L18.8,21.3 L18.4,19.9 L18.0,21.2 L17.6,18.6 L17.2,19.4 L16.9,21.0 L16.5,20.9 L16.1,19.0 L15.7,20.9 L15.3,20.6 L14.9,19.8 L14.5,19.3 L14.1,20.9 L13.8,19.5 L13.4,20.2 L13.0,19.6 L12.6,18.6 L12.2,18.7 L11.8,20.9 L11.4,19.9 L11.1,19.2 L10.7,19.1 L10.3,20.1 L9.9,18.6 L9.5,19.3 L9.1,20.9 L8.7,19.9 L8.3,21.1 L8.0,20.2 L7.6,19.9 L7.2,19.0 L6.8,21.1 L6.4,21.4 L6.0,20.8 L5.6,18.8 L5.3,19.5 L4.9,19.4 L4.5,20.7 L4.1,19.8 L3.7,20.8 L3.3,20.4 L2.9,19.4 L2.5,18.9 L2.2,21.3 L1.8,21.3 L1.4,19.8 L1.0,20.0 Z" fill="#f0b400"/><path d="M1.0,37.9 L1.4,37.0 L1.8,36.8 L2.2,37.4 L2.5,36.9 L2.9,38.0 L3.3,38.6 L3.7,37.0 L4.1,39.2 L4.5,38.4 L4.9,37.0 L5.3,38.6 L5.6,37.9 L6.0,37.6 L6.4,38.1 L6.8,36.6 L7.2,39.2 L7.6,37.2 L8.0,39.2 L8.3,38.0 L8.7,36.8 L9.1,38.5 L9.5,37.7 L9.9,38.8 L10.3,39.2 L10.7,39.3 L11.1,37.9 L11.4,39.2 L11.8,38.1 L12.2,37.8 L12.6,36.6 L13.0,37.9 L13.4,38.6 L13.8,39.0 L14.1,37.6 L14.5,37.2 L14.9,36.9 L15.3,38.8 L15.7,38.2 L16.1,38.9 L16.5,38.8 L16.9,36.7 L17.2,36.8 L17.6,38.8 L18.0,39.3 L18.4,38.3 L18.8,37.0 L19.2,38.3 L19.6,38.9 L19.9,38.7 L20.3,38.4 L20.7,38.8 L21.1,37.8 L21.5,37.4 L21.9,37.5 L22.3,38.9 L22.7,38.3 L23.0,37.7 L23.4,38.1 L23.8,37.1 L24.2,38.0 L24.6,38.6 L25.0,37.4 L25.4,37.0 L25.7,38.4 L26.1,38.0 L26.5,37.3 L26.9,37.3 L27.3,39.1 L27.7,36.9 L28.1,37.8 L28.5,38.1 L28.8,37.7 L29.2,38.8 L29.6,37.2 L30.0,38.5 L30.4,36.8 L30.8,36.5 L31.2,37.2 L31.5,39.4 L31.9,37.3 L32.3,38.0 L32.7,38.7 L33.1,37.8 L33.5,39.1 L33.9,38.5 L34.3,38.9 L34.6,38.9 L35.0,37.7 L35.4,39.3 L35.8,38.8 L36.2,38.9 L36.6,37.9 L37.0,36.9 L37.3,38.3 L37.7,38.6 L38.1,36.7 L38.5,36.7 L38.9,38.2 L39.3,36.6 L39.7,37.8 L40.1,38.8 L40.4,36.5 L40.8,37.3 L41.2,39.1 L41.6,37.2 L42.0,38.1 L42.4,38.5 L42.8,38.9 L43.1,38.6 L43.5,38.3 L43.9,37.2 L44.3,37.4 L44.7,37.1 L45.1,37.8 L45.5,38.3 L45.9,38.9 L46.2,38.8 L46.6,37.9 L47.0,36.9 L47.4,38.3 L47.8,37.8 L48.2,36.7 L48.6,39.0 L48.9,37.3 L49.3,37.3 L49.7,37.8 L50.1,37.7 L50.5,39.0 L50.9,36.8 L51.3,39.4 L51.7,37.1 L52.0,38.1 L52.4,37.6 L52.8,37.4 L53.2,38.6 L53.6,38.9 L54.0,37.9 L54.4,36.6 L54.7,37.1 L55.1,37.1 L55.5,37.5 L55.9,38.8 L56.3,37.1 L56.7,38.8 L57.1,39.1 L57.5,37.7 L57.8,37.7 L58.2,39.4 L58.6,38.4 L59.0,37.8 L59.0,47.4 L58.6,47.1 L58.2,46.7 L57.8,47.4 L57.5,48.2 L57.1,47.5 L56.7,47.8 L56.3,47.6 L55.9,47.9 L55.5,47.5 L55.1,47.9 L54.7,47.7 L54.4,46.9 L54.0,47.5 L53.6,46.7 L53.2,48.6 L52.8,46.6 L52.4,47.3 L52.0,49.5 L51.7,47.7 L51.3,46.8 L50.9,47.0 L50.5,48.4 L50.1,47.0 L49.7,48.5 L49.3,47.0 L48.9,48.0 L48.6,49.4 L48.2,47.2 L47.8,48.8 L47.4,46.7 L47.0,48.7 L46.6,49.4 L46.2,48.8 L45.9,48.4 L45.5,46.7 L45.1,48.3 L44.7,47.3 L44.3,47.8 L43.9,48.0 L43.5,49.1 L43.1,48.1 L42.8,48.5 L42.4,48.8 L42.0,49.4 L41.6,47.2 L41.2,48.6 L40.8,49.2 L40.4,48.9 L40.1,47.2 L39.7,48.1 L39.3,47.1 L38.9,47.3 L38.5,48.0 L38.1,46.9 L37.7,47.5 L37.3,46.8 L37.0,48.1 L36.6,49.3 L36.2,46.9 L35.8,48.1 L35.4,48.0 L35.0,46.9 L34.6,47.8 L34.3,47.7 L33.9,48.7 L33.5,48.2 L33.1,47.7 L32.7,48.6 L32.3,48.2 L31.9,47.6 L31.5,48.6 L31.2,47.4 L30.8,49.0 L30.4,48.2 L30.0,49.2 L29.6,48.2 L29.2,46.8 L28.8,49.0 L28.5,48.0 L28.1,49.1 L27.7,48.0 L27.3,48.1 L26.9,48.3 L26.5,47.6 L26.1,47.1 L25.7,49.5 L25.4,49.5 L25.0,47.2 L24.6,49.2 L24.2,48.3 L23.8,49.1 L23.4,46.7 L23.0,48.4 L22.7,48.2 L22.3,48.8 L21.9,48.4 L21.5,47.2 L21.1,47.3 L20.7,47.9 L20.3,46.9 L19.9,48.6 L19.6,47.3 L19.2,47.7 L18.8,46.7 L18.4,49.1 L18.0,48.0 L17.6,47.1 L17.2,47.7 L16.9,46.9 L16.5,49.0 L16.1,49.1 L15.7,47.5 L15.3,46.8 L14.9,48.7 L14.5,49.2 L14.1,47.6 L13.8,48.1 L13.4,49.2 L13.0,47.2 L12.6,48.5 L12.2,47.4 L11.8,49.1 L11.4,47.3 L11.1,48.3 L10.7,49.3 L10.3,48.5 L9.9,47.7 L9.5,49.2 L9.1,47.8 L8.7,49.0 L8.3,47.8 L8.0,46.6 L7.6,49.5 L7.2,47.9 L6.8,48.6 L6.4,46.9 L6.0,48.5 L5.6,47.8 L5.3,47.7 L4.9,47.1 L4.5,46.6 L4.1,46.7 L3.7,48.3 L3.3,47.1 L2.9,49.2 L2.5,47.7 L2.2,46.9 L1.8,47.9 L1.4,49.0 L1.0,48.7 Z" fill="#f0b400"/></svg>
<div class="t" style="left:212px;width:60px;text-align:center;top:757px;font-size:10.5px;color:#c4c4c4">Blip</div>
<div class="t" style="left:288px;width:60px;text-align:center;top:757px;font-size:10.5px;color:#c4c4c4">Boing</div>
<div class="t" style="left:364px;width:60px;text-align:center;top:757px;font-size:10.5px;color:#c4c4c4">Boom</div>
<div class="t" style="left:440px;width:60px;text-align:center;top:757px;font-size:10.5px;color:#c4c4c4">Music</div>
<!-- slider -->
<div class="a" style="left:1138px;top:982px;width:55px;height:2px;background:#5c5c5c"></div>
<div class="a" style="left:1162px;top:977px;width:11px;height:11px;border-radius:50%;background:#9a9a9a"></div>

</body></html>
